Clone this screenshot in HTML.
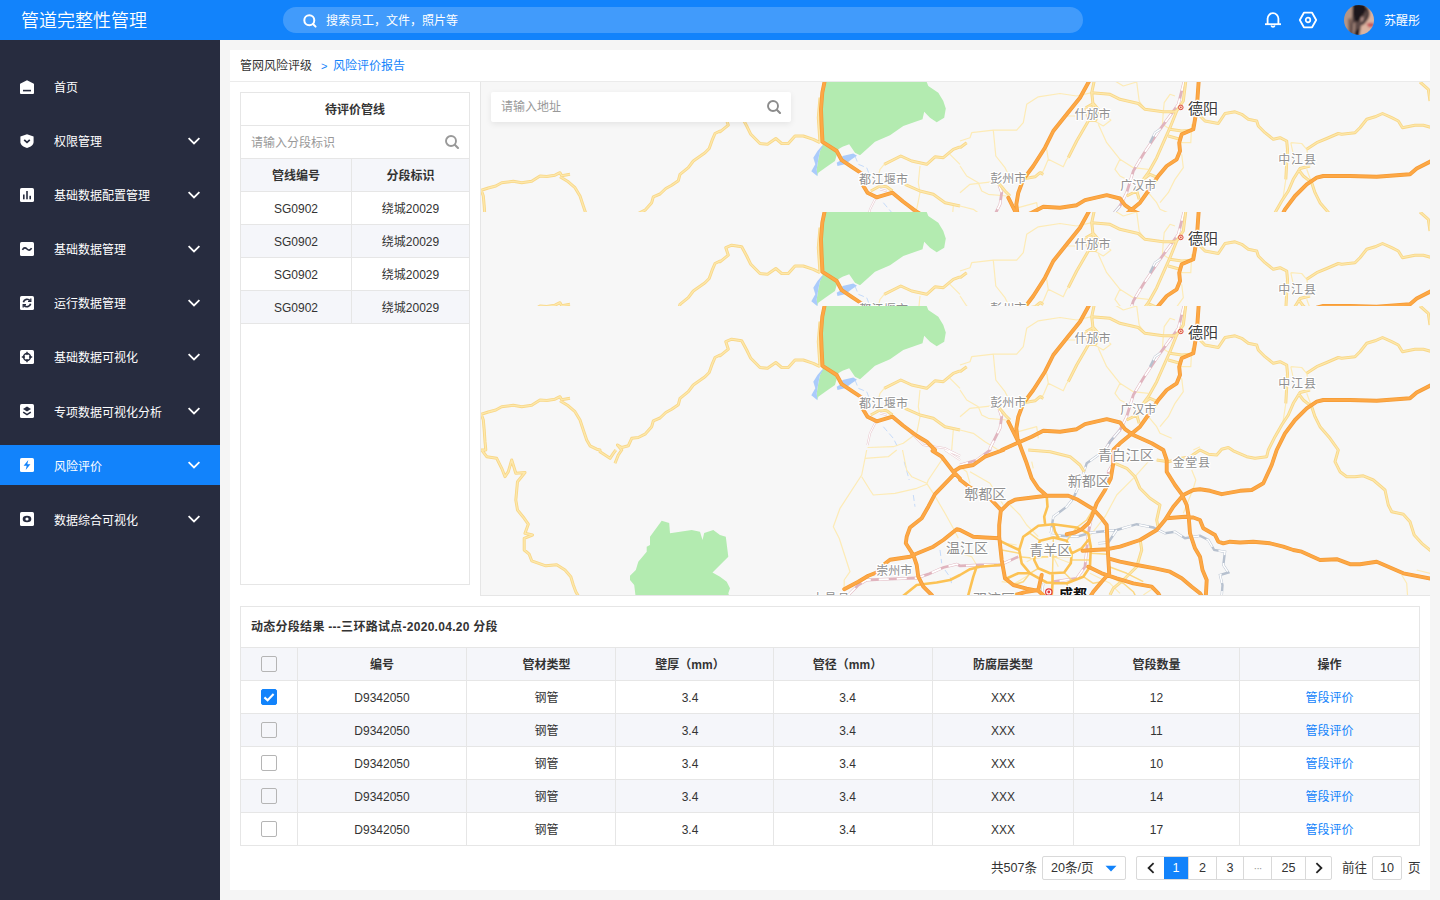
<!DOCTYPE html>
<html lang="zh-CN">
<head>
<meta charset="utf-8">
<title>管道完整性管理</title>
<style>
*{box-sizing:border-box;margin:0;padding:0}
html,body{width:1440px;height:900px;overflow:hidden}
body{position:relative;background:#f5f5f5;font-family:"Liberation Sans","Noto Sans CJK SC",sans-serif;font-size:12px;color:#333}
.abs{position:absolute}
#hdr{position:absolute;left:0;top:0;width:1440px;height:40px;background:#1283fb}
#hdr .title{position:absolute;left:21px;top:0;line-height:42px;font-size:18px;color:#fff;font-weight:350;letter-spacing:0}
#hdr .search{position:absolute;left:283px;top:7px;width:800px;height:26px;border-radius:13px;background:rgba(255,255,255,.2)}
#hdr .search span{position:absolute;left:43px;top:0;line-height:28px;color:#fff;font-size:12px}
#hdr .search svg{position:absolute;left:19px;top:6px}
#hdr .uname{position:absolute;left:1384px;top:0;line-height:42px;color:#fff;font-size:12px}
#side{position:absolute;left:0;top:40px;width:220px;height:860px;background:#272c3f}
.mi{position:absolute;left:0;width:220px;height:40px;color:#fff;font-size:12px;line-height:42px}
.mi.on{background:#1283fb}
.mi span{position:absolute;left:54px;top:0}
.mi svg.ic{position:absolute;left:19px;top:12px}
.mi svg.ch{position:absolute;left:187px;top:15px}
#card{position:absolute;left:230px;top:50px;width:1200px;height:840px;background:#fff}
#bc{position:absolute;left:0;top:0;width:1200px;height:32px;border-bottom:1px solid #ebebeb;line-height:32px}
#bc .a{position:absolute;left:10px;top:0;color:#333}
#bc .gt{position:absolute;left:91px;top:0;color:#1283fb;font-size:11px}
#bc .b{position:absolute;left:103px;top:0;color:#1283fb}
#lp{position:absolute;left:10px;top:42px;width:230px;height:493px;border:1px solid #e6e6e6}
#lp .r{position:absolute;left:0;width:228px;height:33px;border-bottom:1px solid #e6e6e6;line-height:34px;text-align:center}
#lp .r.g{background:#f5f6fa}
#lp .r b{font-weight:700}
#lp .c1{position:absolute;left:0;top:0;width:111px;height:32px;border-right:1px solid #e6e6e6}
#lp .c2{position:absolute;left:111px;top:0;width:117px;height:32px}
#map{position:absolute;left:250px;top:32px;width:950px;height:514px;border-left:1px solid #e6e6e6;border-bottom:1px solid #e6e6e6;background:#f7f7f7;overflow:hidden}
#bp{position:absolute;left:10px;top:556px;width:1180px;height:240px;border:1px solid #e6e6e6}
#bp .ttl{position:absolute;left:10px;top:0;line-height:41px;font-weight:700;color:#333;letter-spacing:.28px}
.tr{position:absolute;left:0;width:1178px;height:33px;border-top:1px solid #e6e6e6;line-height:34px;text-align:center}
.tr.g{background:#f5f6fa}
.tr div{position:absolute;top:0;height:32px;border-left:1px solid #e6e6e6}
.tr div:first-child{border-left:none}
.tr.h{font-weight:700}
.tr .lk{color:#1283fb}
.cb{position:absolute;left:20px;top:8px;width:16px;height:16px;border:1px solid #b5b5b5;border-radius:2px;background:transparent}
.cb.ck{background:#1283fb;border-color:#1283fb}
#pg{position:absolute;left:0;top:806px;width:1200px;height:24px;line-height:22px;font-size:12.6px;color:#333}
#pg .bx{position:absolute;top:0;height:24px;border:1px solid #d9d9d9;text-align:center;background:#fff}
</style>
</head>
<body>
<div id="hdr">
  <div class="title">管道完整性管理</div>
  <div class="search">
    <svg width="16" height="16" viewBox="0 0 16 16"><circle cx="7.3" cy="7.3" r="5" fill="none" stroke="#fff" stroke-width="2"/><path d="M11 11 L13.6 13.6" stroke="#fff" stroke-width="2" stroke-linecap="round"/></svg>
    <span>搜索员工，文件，照片等</span>
  </div>
  <svg class="abs" style="left:1263px;top:9px" width="20" height="20" viewBox="0 0 20 20"><path d="M4.6 15 V9.6 a5.4 5.4 0 0 1 10.8 0 V15" fill="none" stroke="#fff" stroke-width="1.8"/><path d="M2 15.2 H18" stroke="#fff" stroke-width="1.8"/><path d="M8.2 16.6 a1.9 1.9 0 0 0 3.6 0" fill="none" stroke="#fff" stroke-width="1.6"/></svg>
  <svg class="abs" style="left:1298px;top:10px" width="20" height="20" viewBox="0 0 20 20"><path d="M5.9 2.7 H14.1 L18.2 10 L14.1 17.3 H5.9 L1.8 10 Z" fill="none" stroke="#fff" stroke-width="1.8" stroke-linejoin="round"/><circle cx="10" cy="10" r="2.3" fill="none" stroke="#fff" stroke-width="1.7"/></svg>
  <svg class="abs" style="left:1344px;top:5px" width="30" height="30" viewBox="0 0 30 30">
    <defs><clipPath id="avc"><circle cx="15" cy="15" r="15"/></clipPath><filter id="avb" x="-10%" y="-10%" width="120%" height="120%"><feGaussianBlur stdDeviation="0.9"/></filter></defs>
    <g clip-path="url(#avc)"><g filter="url(#avb)"><rect x="-3" y="-3" width="36" height="36" fill="#dcb3a0"/>
    <path d="M-3 -3 H10 L8 33 H-3 Z" fill="#b59586"/>
    <path d="M4.2 14 L6.8 13 L7.5 33 L4.5 33 Z" fill="#7a5f56"/>
    <path d="M8.5 -2 L21 -1 L25 7 L24 13 L21 17.5 L17 21 L15 33 L6.5 33 L7 20 L8.2 10 Z" fill="#5c4846"/>
    <path d="M9 -2 L20.5 -1 L22.5 5 L18.5 10 L14 17 L10.5 16 L9 8 Z" fill="#1d161a"/>
    <path d="M22 2 C26.5 8 24.5 14 18 19.5" fill="none" stroke="#493737" stroke-width="2.2"/>
    <path d="M9.2 18 L11.4 17.4 L10.6 33 L8.4 33 Z" fill="#a18378"/>
    <path d="M11 26 L15.6 23.5 L14.6 33 L10 33 Z" fill="#251c1f"/>
    <path d="M16.8 12.5 L19.6 11.8 L19 15.6 L16.6 17.2 Z" fill="#b8948c"/>
    <ellipse cx="18.8" cy="8.6" rx="1.7" ry="1" fill="#241a1d"/>
    <path d="M22.4 19 L26 17.8 L30 18.2 L30 21.4 L25 22.4 Z" fill="#c5545a"/></g></g>
  </svg>
  <div class="uname">苏醒彤</div>
</div>
<div id="side">
<div class="mi" style="top:27px"><svg class="ic" width="16" height="16" viewBox="-1 -1 16 16"><path d="M7 0.3 L13.4 3.4 A1 1 0 0 1 14 4.3 V13 a1 1 0 0 1 -1 1 H1 a1 1 0 0 1 -1 -1 V4.3 A1 1 0 0 1 .6 3.4 Z" fill="#fff"/><rect x="3" y="9.8" width="8" height="1.6" fill="#272c3f"/></svg><span>首页</span></div>
<div class="mi" style="top:81px"><svg class="ic" width="16" height="16" viewBox="-1 -1 16 16"><path d="M7 0.2 L13.6 2.4 V8 C13.6 11 10.5 13 7 14 C3.5 13 .4 11 .4 8 V2.4 Z" fill="#fff"/><path d="M4.2 5.8 L7 8.4 L9.8 5.8" fill="none" stroke="#272c3f" stroke-width="1.7"/></svg><span>权限管理</span><svg class="ch" width="14" height="10" viewBox="0 0 14 10"><path d="M1.6 2.2 L7 7.4 L12.4 2.2" fill="none" stroke="#fff" stroke-width="1.8"/></svg></div>
<div class="mi" style="top:135px"><svg class="ic" width="16" height="16" viewBox="-1 -1 16 16"><rect width="14" height="14" rx="1.6" fill="#fff"/><rect x="3" y="6.5" width="1.6" height="4.8" fill="#272c3f"/><rect x="6.2" y="3" width="1.6" height="8.3" fill="#272c3f"/><rect x="9.4" y="7.8" width="1.6" height="3.5" fill="#272c3f"/></svg><span>基础数据配置管理</span><svg class="ch" width="14" height="10" viewBox="0 0 14 10"><path d="M1.6 2.2 L7 7.4 L12.4 2.2" fill="none" stroke="#fff" stroke-width="1.8"/></svg></div>
<div class="mi" style="top:189px"><svg class="ic" width="16" height="16" viewBox="-1 -1 16 16"><rect width="14" height="14" rx="1.6" fill="#fff"/><path d="M2.4 7.8 C4 5.2 5.6 5.6 7 7 C8.4 8.4 10 8.8 11.6 6.2" fill="none" stroke="#272c3f" stroke-width="1.6"/></svg><span>基础数据管理</span><svg class="ch" width="14" height="10" viewBox="0 0 14 10"><path d="M1.6 2.2 L7 7.4 L12.4 2.2" fill="none" stroke="#fff" stroke-width="1.8"/></svg></div>
<div class="mi" style="top:243px"><svg class="ic" width="16" height="16" viewBox="-1 -1 16 16"><rect width="14" height="14" rx="1.6" fill="#fff"/><path d="M3.4 6.2 A3.8 3.8 0 0 1 10 4.6" fill="none" stroke="#272c3f" stroke-width="1.7"/><path d="M10.8 2.6 V5.4 H8" fill="none" stroke="#272c3f" stroke-width="1.3"/><path d="M10.6 7.8 A3.8 3.8 0 0 1 4 9.4" fill="none" stroke="#272c3f" stroke-width="1.7"/><path d="M3.2 11.4 V8.6 H6" fill="none" stroke="#272c3f" stroke-width="1.3"/></svg><span>运行数据管理</span><svg class="ch" width="14" height="10" viewBox="0 0 14 10"><path d="M1.6 2.2 L7 7.4 L12.4 2.2" fill="none" stroke="#fff" stroke-width="1.8"/></svg></div>
<div class="mi" style="top:297px"><svg class="ic" width="16" height="16" viewBox="-1 -1 16 16"><rect width="14" height="14" rx="1.6" fill="#fff"/><circle cx="7" cy="7" r="3.4" fill="none" stroke="#272c3f" stroke-width="1.5"/><path d="M7 1.8 V5 M7 9 V12.2 M1.8 7 H5 M9 7 H12.2" stroke="#272c3f" stroke-width="1.4"/></svg><span>基础数据可视化</span><svg class="ch" width="14" height="10" viewBox="0 0 14 10"><path d="M1.6 2.2 L7 7.4 L12.4 2.2" fill="none" stroke="#fff" stroke-width="1.8"/></svg></div>
<div class="mi" style="top:351px"><svg class="ic" width="16" height="16" viewBox="-1 -1 16 16"><rect width="14" height="14" rx="1.6" fill="#fff"/><path d="M7 2.6 L11 5 L7 7.4 L3 5 Z" fill="#272c3f"/><path d="M3.2 8.2 L7 10.6 L10.8 8.2" fill="none" stroke="#272c3f" stroke-width="1.5"/></svg><span style="top:1px">专项数据可视化分析</span><svg class="ch" width="14" height="10" viewBox="0 0 14 10"><path d="M1.6 2.2 L7 7.4 L12.4 2.2" fill="none" stroke="#fff" stroke-width="1.8"/></svg></div>
<div class="mi on" style="top:405px"><svg class="ic" width="16" height="16" viewBox="-1 -1 16 16"><rect width="14" height="14" rx="1.6" fill="#fff"/><path d="M8.3 2 L3.6 7.8 H6.7 L5.7 12 L10.4 6.2 H7.3 Z" fill="#1283fb"/></svg><span style="top:1px">风险评价</span><svg class="ch" width="14" height="10" viewBox="0 0 14 10"><path d="M1.6 2.2 L7 7.4 L12.4 2.2" fill="none" stroke="#fff" stroke-width="1.8"/></svg></div>
<div class="mi" style="top:459px"><svg class="ic" width="16" height="16" viewBox="-1 -1 16 16"><rect width="14" height="14" rx="1.6" fill="#fff"/><ellipse cx="7" cy="7" rx="4.3" ry="3.3" fill="#272c3f"/><circle cx="7" cy="7" r="1.6" fill="#fff"/></svg><span style="top:1px">数据综合可视化</span><svg class="ch" width="14" height="10" viewBox="0 0 14 10"><path d="M1.6 2.2 L7 7.4 L12.4 2.2" fill="none" stroke="#fff" stroke-width="1.8"/></svg></div>
</div>
<div id="card">
<div id="bc"><span class="a">管网风险评级</span><span class="gt">&gt;</span><span class="b">风险评价报告</span></div>
<div id="lp">
<div class="r" style="top:0"><b>待评价管线</b></div>
<div class="r" style="top:33px;text-align:left"><span style="position:absolute;left:10px;top:0;color:#999">请输入分段标识</span><svg style="position:absolute;left:203px;top:8px" width="16" height="16" viewBox="0 0 16 16"><circle cx="7" cy="7" r="5" fill="none" stroke="#999" stroke-width="1.9"/><path d="M10.8 10.8 L14 14" stroke="#999" stroke-width="2.1" stroke-linecap="round"/></svg></div>
<div class="r g" style="top:66px"><div class="c1"><b>管线编号</b></div><div class="c2"><b>分段标识</b></div></div>
<div class="r" style="top:99px"><div class="c1">SG0902</div><div class="c2">绕城20029</div></div>
<div class="r g" style="top:132px"><div class="c1">SG0902</div><div class="c2">绕城20029</div></div>
<div class="r" style="top:165px"><div class="c1">SG0902</div><div class="c2">绕城20029</div></div>
<div class="r g" style="top:198px"><div class="c1">SG0902</div><div class="c2">绕城20029</div></div>
</div>
<div id="map">
<svg style="position:absolute;left:0;top:0px" width="949" height="130" viewBox="0 0 949 130" font-family='"Liberation Sans","Noto Sans CJK SC",sans-serif'><rect width="949" height="130" fill="#f7f7f7"/>
<path d="M342 0 L445.7 0 L447.3 4 L457.3 10.7 L462.3 19 L464.8 26.5 L463.2 35.7 L455.7 40.3 L449 35.7 L443.2 29.8 L441.5 37.3 L422.3 44 L409 53.2 L394 59.8 L385.7 67.3 L379 73.2 L374 70.7 L368.2 62.3 L361.5 64.8 L357.3 67.3 L354 79 L345.7 84.8 L337.3 90.7 L336.5 94 L335.7 87.3 L337.3 77.3 L339 69 L341.5 63.2 L340.7 44 L340 27.3 L341.3 10.7 Z M180.7 214.8 L188.2 217 L189 227.3 L210.7 224 L219 225.7 L221.5 234 L223.2 227 L232.3 224 L239 229 L244.8 230.7 L247.3 250.7 L231.5 266.5 L239 270.7 L245.7 275.7 L249 282.3 L247.3 287.3 L249 292.3 L154.8 292.3 L153.2 279 L149 274 L149 269.8 L154.8 264 L157.3 255.7 L165.7 245.7 L165.7 240.7 L169 239 L169 230.7 Z" fill="#b3ebb0"/>
<path d="M341 63.7 L336.5 69 L332.3 75.7 L334.3 82.3 L330.3 89.3 L336.5 94.3 L335.7 87.3 L337.3 77.3 L339 69 L342 64.3 Z M361.5 74 L372.3 71.5 L376 73.7 L370.7 77.3 L364 82.3 L356.5 84 L355.7 80.7 L359.8 78.2 Z" fill="#aacbfb"/>
<path d="M423.2 155.7 L428.2 174 M432.3 189 L434 200.7 M459 244 L460.7 257.3 M464 264 L469.8 272.3 L470.7 279 M374 74 L377.3 82.3 L385.7 85.7 L389 94 M402.3 120.7 L412.3 132.3 L417.3 142.3" fill="none" stroke="#b9d3fa" stroke-width="0.8" stroke-dasharray="6 3"/>
<path d="M397.3 94 L399 87.3 L403.2 82.3 M439 84 L437.3 100.7 L439 110.7 L435.7 127.3 L422.3 137.3 L412.3 140.7 L386.5 141.5 M469 72.3 L479 82.3 M472.3 124 L470.7 144 M385.7 144 L380.7 169 L359 202.3 L352.3 220.7 L358.2 232.3 L369 265.7 L363.2 274 L363.2 282.3 M384 152.3 L407.3 150.7 L415.7 144 M380.7 170.7 L389 184 L392.3 189 L414 187.3 L435.7 182.3 L445.7 178.2 L447.3 174 L460.7 154 M421.5 144 L425.7 164 L430.7 170.7 L445.7 177.3 L452.3 187.3 L464 207.3 L472.3 222.3 L477.3 232.3 M479 84 L485.7 94 L497.3 100.7 L500.7 109 L507.3 112.3 L525.7 114 M479 110.7 L489 102.3 L510.7 99.8 M479 124 L492.3 127.3 L504 135.7 L517.3 144 M479 59 L489 55.7 L490.7 50.7 L512.3 48.2 L535.7 48.2 L542.3 40.7 L545.7 22.3 L557.3 14.8 L579 11.5 L595.7 14 L610.7 10.7 M512.3 48.2 L514.8 74 L524 85.7 L527.3 92.3 M565.7 67.3 L567.3 77.3 L582.3 84.8 L585.7 77.3 L587.3 75.7 M567.3 77.3 L562.3 89 L559 90.7 M537.3 125.7 L555.7 120.7 L557.3 132.3 M617.3 42.3 L625.7 60.7 L639 77.3 L652.3 85.7 L667.3 87.3 M639 77.3 L634 87.3 L639 94 L652.3 100.7 M612.3 38.2 L622.3 44 L629.8 38.2 L625.7 34 M582.3 34 L595.7 34 M634 -1 L642.3 4 L655.7 0 M655.7 0 L658.2 19 L664 27.3 M682.3 29.8 L681.5 42.3 L689 47.3 M694 14 L689 12.3 L683.2 20.7 L682.3 29.8 M710.7 42.3 L709.8 60.7 L699 60.7 M700.7 72.3 L702.3 85.7 L694 97.3 L687.3 110.7 L679 120.7 M667.3 110.7 L675.7 120.7 L679 127.3 L690.7 132.3 M712.3 144 L719 140.7 M809.8 60.7 L820.7 61.5 L825.7 67.3 L829 84 M809.8 60.7 L812.3 72.3 L812.3 84 M804.8 97.3 L802.3 114 L797.3 127.3 M825.7 87.3 L830.7 100.7 M920.7 269 L925.7 277.3 L926.5 289 M935.7 264 L949.8 267.7 M479 160.7 L485.7 165.7 L489 177.3 M489 165.7 L509 177.3 L522.3 199 M529 199 L539 209 L545.7 219 L557.3 230.7 M520.7 236.5 L535.7 239 M479 247.3 L490.7 250.7 L495.7 259 M605.7 234 L624 210.7 L635.7 189 L654 170.7 L667.3 155.7 M635.7 159 L645.7 162.3 M609 267.3 L629 277.3 L639 287.3 M702.3 207.3 L705.7 199 L712.3 182.3 L714.8 174 L710.7 164 M550.7 155.7 L552.3 162.3 M545.7 255.7 L552.3 252.3 L572.3 250.7 L589.8 257.3 M572.3 250.7 L577.3 260.7 M520.7 275.7 L534 277.3 L549 268.2 M662.3 289 L672.3 282.3" fill="none" stroke="#fdebb6" stroke-width="1.2" stroke-linejoin="round"/>
<path d="M395.7 114 L389 127.3 L386.5 139 M399 107.3 L405.7 109 M427.3 124 L442.3 139 L464 142.3 L479 149.8 L464 144 L479 154" fill="none" stroke="#e6c3ca" stroke-width="2"/>
<path d="M395.7 114 L389 127.3 L386.5 139 M399 107.3 L405.7 109 M427.3 124 L442.3 139 L464 142.3 L479 149.8 L464 144 L479 154" fill="none" stroke="#fff" stroke-width="1.1"/>
<path d="M703.2 -1 L697.3 22.3 L679 47.3 L662.3 72.3 L652.3 89 L645.7 110.7 L639 124 L629 135.7 L624 144 M367.3 289 L377.3 279 L385.7 274 L405.7 273.2 L435.7 272 L447.3 268.2 L462.3 261.5 L475.7 258.2 L479 259.8 L479 259.8 L499 259 L519 259 L537.3 250.7 M517.3 100.7 L520.7 110.7 L519 122.3 L509 142.3 L509 144 L495.7 154 L479 159 M632.3 157.3 L627.3 165.7 L627.3 175.7 M610.7 210.7 L607.3 227.3 L604 260.7 L595.7 272.3 L572.3 275.7" fill="none" stroke="#e0b4be" stroke-width="2.8"/>
<path d="M703.2 -1 L697.3 22.3 L679 47.3 L662.3 72.3 L652.3 89 L645.7 110.7 L639 124 L629 135.7 L624 144 M367.3 289 L377.3 279 L385.7 274 L405.7 273.2 L435.7 272 L447.3 268.2 L462.3 261.5 L475.7 258.2 L479 259.8 L479 259.8 L499 259 L519 259 L537.3 250.7 M517.3 100.7 L520.7 110.7 L519 122.3 L509 142.3 L509 144 L495.7 154 L479 159 M632.3 157.3 L627.3 165.7 L627.3 175.7 M610.7 210.7 L607.3 227.3 L604 260.7 L595.7 272.3 L572.3 275.7" fill="none" stroke="#fff" stroke-width="1.8" stroke-dasharray="10 8"/>
<path d="M617.3 149 L605.7 157.3 L599 177.3 L592.3 192.3 L585.7 200.7 L572.3 210.7 L569.8 227.3 M569.8 229 L595.7 230.7 L610.7 226.5 L635.7 224 L655.7 218.2 L672.3 221.5 L684 227.3 L694 225.7 L704 232.3 L719 229.8 L719 229.8 L727.3 234 L733.2 244 L744 245.7 L742.3 259 L747.3 266.5 L739 269 L741.5 279 L740.7 289.8 M617.3 237.3 L627.3 236.5 L635.7 224 M679 47.3 L674 50.7 L669 60.7 M639 124 L629 135.7 L624 144 M562.3 277.3 L560.7 289" fill="none" stroke="#b7c1cf" stroke-width="2.4"/>
<path d="M617.3 149 L605.7 157.3 L599 177.3 L592.3 192.3 L585.7 200.7 L572.3 210.7 L569.8 227.3 M569.8 229 L595.7 230.7 L610.7 226.5 L635.7 224 L655.7 218.2 L672.3 221.5 L684 227.3 L694 225.7 L704 232.3 L719 229.8 L719 229.8 L727.3 234 L733.2 244 L744 245.7 L742.3 259 L747.3 266.5 L739 269 L741.5 279 L740.7 289.8 M617.3 237.3 L627.3 236.5 L635.7 224 M679 47.3 L674 50.7 L669 60.7 M639 124 L629 135.7 L624 144 M562.3 277.3 L560.7 289" fill="none" stroke="#fff" stroke-width="1.5" stroke-dasharray="10 8"/>
<path d="M0.3 108.2 L7.3 106 L14.8 104 L20.7 100.7 L32.3 99.3 L40.7 100.7 L50.7 99.3 L59 94 L65.7 94.5 L74 93.2 L79 90.7 L80.7 93.7 L89 92.3 M79 94.8 L87.3 99.8 L94 105.7 L99 114 L102.3 124 L105.7 134 L109 139.8 L115.7 143.2 L119 144 L119 145.7 L129 152.3 L132.3 147.3 L134.8 144 M134 157.3 L137.3 149 L140.7 144 L136.5 139 L140.7 141.5 L147.3 139.8 L150.7 132.3 L157.3 131.5 L164 128.2 L170.7 120.7 L172.3 114.8 L179 112 L184.8 106.5 L190.7 103.2 L197.3 98.7 L199 92.3 L207.3 85.7 L212.3 79 L224 70.7 L228.2 66.5 L231.5 57.3 L234 51.5 L239 49 L239 49.8 L247.3 43.2 L244.8 35.7 L250.7 33.2 L260.7 34.8 L265.7 44 L269.8 52.3 L279 61.5 L286.5 62.3 L294.8 56.5 L300.7 61.5 L307.3 61.5 L314 54 L322.3 54 L332.3 57.3 L339 60.7 M0.3 108.2 L2.3 114 L3.2 124 L4 135.7 L4.8 144 L0.7 144 L5.7 150.7 L15.7 152.3 L20.7 162.3 L24 170.7 L27.3 165.7 L30.7 154 L34.8 167.3 L44 166.5 L36.5 175.7 L34.8 194 L36.5 204 L43.2 212.3 L47.3 218.2 L44 227.3 L51.5 229 L43.2 232.3 L43.2 244 L48.2 248.2 L50.7 254.8 L64.8 259.8 L75.7 258.7 L84 264 L89.8 270.7 L92.3 279 L94.8 285.7 L98.2 291.5 M339 15.7 L337.3 35.7 L338.2 49 L339 60.7 M613.2 -1 L610.7 10.7 L611.5 17.3 L612.3 25.7 M610.7 10.7 L629 12.3 L639 17.3 L657.3 21.5 L664 27.3 L682.3 29.8 L694 29.8 L699 25.7 M607.3 39 L595.7 59 L587.3 75.7 M604.8 25.7 L612.3 21.5 L617.3 27.3 L614.8 38.2 L607.3 38.2 L604.8 25.7 M704.8 -1 L702.3 19 L695.7 29 L689 45.7 L682.3 60.7 L675.7 75.7 L667.3 90.7 L662.3 97.3 L655.7 109 L645.7 114 M689 47.3 L700.7 49 L710.7 48.2 M687.3 54 L699 57.3 M544 96.5 L554 94.8 L559 90.7 L562.3 92.3 M517.3 100.7 L524 109 L529 114 M479 65.7 L485.7 60.7 M662.3 97.3 L669 92.3 L676.5 95.7 M655.7 109 L658.2 117.3 M719 34 L724 39 L737.3 41.5 L744 31.5 L754 29.8 L760.7 32.3 L767.3 37.3 L775.7 39 L777.3 44 L784 50.7 L792.3 57.3 L799 55.7 L805.7 59 L806.5 67.3 L805.7 80.7 L804.8 97.3 M825.7 67.3 L835.7 60.7 L845.7 56.5 L857.3 51.5 L860.7 52.3 L874 50.7 L879 45.7 L885.7 37.3 L894 34.8 L901.5 31.5 L910.7 35.7 L917.3 39 L921.5 45.7 L934 43.2 L942.3 43.2 L949.8 45.3 M817.3 87.3 L822.3 94 L830.7 100.7 L834 110.7 L839 120.7 L849 132.3 L857.3 144 L857.3 144 L854 155.7 L859 165.7 L865.7 170.7 L874 170.7 L882.3 169.8 L892.3 174 L904 184 L907.3 199 L910.7 205.7 L922.3 208.2 L929 215.7 L933.2 229 L940.7 237.3 L949.8 244.8 M829 84 L819 86.5 L812.3 97.3 L807.3 109 L800.7 119 L794 130.7 L787.3 144 L785.7 150.7 L774 152.3 L765.7 150.7 L752.3 144.8 L747.3 141.5 L740.7 143.2 L735.7 149 L727.3 148.2 L719 144 L709 150.7 L700.7 152.3 L687.3 155.7 L675.7 154 M939 0 L947.3 7.3 L949 19 M389.8 109 L399 104 L405.7 104.8 L411.5 109 M547.3 144 L569 145.7 L589 150.7 L599 159 L603.2 165.7 M634 157.3 L645.7 162.3 L654 170.7 L659 182.3 L669 192.3 L679 199 L675.7 214 L677.3 222.3 M659 232.3 L660.7 244 L655.7 260.7 L642.3 274 L632.3 282.3 L629 289 M403.2 82.3 L419.8 74 L430.7 79 L445.7 82.3 L454 74.8 L462.3 75.7 L472.3 67.3 L479 64.8 M424 102.3 L439 109 L452.3 112.3 L464 120.7 L479 124" fill="none" stroke="#f8d788" stroke-width="3" stroke-linejoin="round"/>
<path d="M0.3 108.2 L7.3 106 L14.8 104 L20.7 100.7 L32.3 99.3 L40.7 100.7 L50.7 99.3 L59 94 L65.7 94.5 L74 93.2 L79 90.7 L80.7 93.7 L89 92.3 M79 94.8 L87.3 99.8 L94 105.7 L99 114 L102.3 124 L105.7 134 L109 139.8 L115.7 143.2 L119 144 L119 145.7 L129 152.3 L132.3 147.3 L134.8 144 M134 157.3 L137.3 149 L140.7 144 L136.5 139 L140.7 141.5 L147.3 139.8 L150.7 132.3 L157.3 131.5 L164 128.2 L170.7 120.7 L172.3 114.8 L179 112 L184.8 106.5 L190.7 103.2 L197.3 98.7 L199 92.3 L207.3 85.7 L212.3 79 L224 70.7 L228.2 66.5 L231.5 57.3 L234 51.5 L239 49 L239 49.8 L247.3 43.2 L244.8 35.7 L250.7 33.2 L260.7 34.8 L265.7 44 L269.8 52.3 L279 61.5 L286.5 62.3 L294.8 56.5 L300.7 61.5 L307.3 61.5 L314 54 L322.3 54 L332.3 57.3 L339 60.7 M0.3 108.2 L2.3 114 L3.2 124 L4 135.7 L4.8 144 L0.7 144 L5.7 150.7 L15.7 152.3 L20.7 162.3 L24 170.7 L27.3 165.7 L30.7 154 L34.8 167.3 L44 166.5 L36.5 175.7 L34.8 194 L36.5 204 L43.2 212.3 L47.3 218.2 L44 227.3 L51.5 229 L43.2 232.3 L43.2 244 L48.2 248.2 L50.7 254.8 L64.8 259.8 L75.7 258.7 L84 264 L89.8 270.7 L92.3 279 L94.8 285.7 L98.2 291.5 M339 15.7 L337.3 35.7 L338.2 49 L339 60.7 M613.2 -1 L610.7 10.7 L611.5 17.3 L612.3 25.7 M610.7 10.7 L629 12.3 L639 17.3 L657.3 21.5 L664 27.3 L682.3 29.8 L694 29.8 L699 25.7 M607.3 39 L595.7 59 L587.3 75.7 M604.8 25.7 L612.3 21.5 L617.3 27.3 L614.8 38.2 L607.3 38.2 L604.8 25.7 M704.8 -1 L702.3 19 L695.7 29 L689 45.7 L682.3 60.7 L675.7 75.7 L667.3 90.7 L662.3 97.3 L655.7 109 L645.7 114 M689 47.3 L700.7 49 L710.7 48.2 M687.3 54 L699 57.3 M544 96.5 L554 94.8 L559 90.7 L562.3 92.3 M517.3 100.7 L524 109 L529 114 M479 65.7 L485.7 60.7 M662.3 97.3 L669 92.3 L676.5 95.7 M655.7 109 L658.2 117.3 M719 34 L724 39 L737.3 41.5 L744 31.5 L754 29.8 L760.7 32.3 L767.3 37.3 L775.7 39 L777.3 44 L784 50.7 L792.3 57.3 L799 55.7 L805.7 59 L806.5 67.3 L805.7 80.7 L804.8 97.3 M825.7 67.3 L835.7 60.7 L845.7 56.5 L857.3 51.5 L860.7 52.3 L874 50.7 L879 45.7 L885.7 37.3 L894 34.8 L901.5 31.5 L910.7 35.7 L917.3 39 L921.5 45.7 L934 43.2 L942.3 43.2 L949.8 45.3 M817.3 87.3 L822.3 94 L830.7 100.7 L834 110.7 L839 120.7 L849 132.3 L857.3 144 L857.3 144 L854 155.7 L859 165.7 L865.7 170.7 L874 170.7 L882.3 169.8 L892.3 174 L904 184 L907.3 199 L910.7 205.7 L922.3 208.2 L929 215.7 L933.2 229 L940.7 237.3 L949.8 244.8 M829 84 L819 86.5 L812.3 97.3 L807.3 109 L800.7 119 L794 130.7 L787.3 144 L785.7 150.7 L774 152.3 L765.7 150.7 L752.3 144.8 L747.3 141.5 L740.7 143.2 L735.7 149 L727.3 148.2 L719 144 L709 150.7 L700.7 152.3 L687.3 155.7 L675.7 154 M939 0 L947.3 7.3 L949 19 M389.8 109 L399 104 L405.7 104.8 L411.5 109 M547.3 144 L569 145.7 L589 150.7 L599 159 L603.2 165.7 M634 157.3 L645.7 162.3 L654 170.7 L659 182.3 L669 192.3 L679 199 L675.7 214 L677.3 222.3 M659 232.3 L660.7 244 L655.7 260.7 L642.3 274 L632.3 282.3 L629 289 M403.2 82.3 L419.8 74 L430.7 79 L445.7 82.3 L454 74.8 L462.3 75.7 L472.3 67.3 L479 64.8 M424 102.3 L439 109 L452.3 112.3 L464 120.7 L479 124" fill="none" stroke="#fde8ac" stroke-width="1.3" stroke-linejoin="round"/>
<path d="M572.3 231.5 L572 250.7 L571.5 267.3 M554 250.7 L572.3 250.7 L590.7 250.7 M585.7 234.8 L595.7 221.5 M559 234.8 L549 227.3 L542.3 230.7 M557.3 262.3 L549 267.3 M583.2 266.5 L592.3 275.7 M590.7 254 L609 254 M538.2 250.7 L553.2 252.3 M595.7 221.5 L605.7 214 L612.3 203.2 M609.8 247.3 L626.5 248.2 M602.3 270.7 L612.3 277.3 L620.7 275.7 M549 267.3 L542.3 275.7 L532.3 279 M520.7 244 L538.2 247.3 M585.7 277.3 L589 287.3 L595.7 292.3 M629 270.7 L642.3 277.3 L652.3 285.7 L655.7 292.3 M628.2 260.7 L645.7 267.3 L662.3 275.7" fill="none" stroke="#fcd883" stroke-width="1.5" stroke-linejoin="round"/>
<path d="M538.2 244 L542.3 230.7 L557.3 219.8 L572.3 218.2 L595.7 221.5 L607.3 227.3 L609.8 240.7 L609 260.7 L602.3 270.7 L585.7 277.3 L565.7 276.5 L549 267.3 L540.7 257.3 L538.2 244 M554 247.3 L559 234.8 L572.3 231.5 L585.7 234.8 L590.7 247.3 L589.8 257.3 L583.2 266.5 L569 267.3 L557.3 262.3 L553.2 254 L554 247.3 M565.7 189.8 L566.5 200.7 L563.2 210.7 L564 217.3 M519 234.8 L529 239.8 L538.2 244 M422.3 289.8 L435.7 279 L455.7 276.5 L469 274 L479 269 L479 269 L489 263.2 L499 260.7 L519 259 M572.3 218.2 L574 225.7 L577.3 231.5 M571.5 267.3 L571.5 277.3 L570.7 290.7 M590.7 247.3 L600.7 242.3 L607.3 234 M524 273.2 L537.3 267.3 L549 267.3 M487.3 289 L492.3 270.7 L495.7 260.7" fill="none" stroke="#fcc254" stroke-width="2.6" stroke-linejoin="round" stroke-linecap="round"/>
<path d="M343.7 -1 L341.3 10.7 L340 27.3 L340.7 44 L341.5 59.8 L355.7 69 L360.7 78.2 L370.7 84.8 L380.7 91.5 L382 103.2 L386.5 110.7 L395.7 115.3 L411.5 110.7 L422.3 119.8 L435.7 129.8 L445.7 135.7 L454 144 L451.5 144.8 L460.7 150.7 L472.3 165.7 L479 172.7 L479 173.7 L489 181.5 L509 192.3 L520.3 204.3 M474 167.3 L454 188.2 L447.3 200.7 L440.7 212.3 L429 221.5 L425.7 230.7 L424.8 237.3 L432.3 249 L435.7 259 L437.3 270.7 L442.3 280.7 L450.7 289 L454.8 294.8 M363.2 283.2 L377.3 275.7 L387.3 269.8 L395.7 266.5 L403.2 258.2 L409 253.7 L429 250.7 L432.3 249 L452.3 240.7 L462.3 234 L475.7 223.2 L479 224 L479 224 L492.3 230.7 L504 231.5 L518.2 232.3 M565.7 292.3 L557.3 284.8 L545.7 282.7 L532.3 279 L524 272.3 L520.7 254 L518.2 230.7 L518.2 219 L519.8 204.8 L527.3 197.3 L534 193.7 L565.7 189.8 L587.3 189.8 L595.7 193.2 L612.3 203.2 L620.7 212.3 L625.7 219 L626.5 237.3 L627.3 252.3 L628.2 267.3 L620.7 275.7 L612.3 285.7 L608.2 292.3 M608.2 -1 L599 15.7 L585.7 32.3 L572.3 49 L564 65.7 L552.3 84 L542.3 97.3 L537.3 110.7 L535.3 122.3 L536.5 132.3 L540.7 144 L540.7 144 L545.7 157.3 L550.7 172.3 L557.3 182.3 L565.7 189.8 M527.3 115.7 L532.3 125.7 L536.5 134 M472.3 165.7 L479 161.5 L479 161.5 L492.3 159 L504 150.7 L522.3 144 L520.7 144 L535.7 137.3 L550.7 130.7 L562.3 124.8 L579 125.7 L595.7 123.2 L604 118.2 L625.7 113.2 L639 116.5 L644 123.2 L652.3 129 L670.7 137.3 L682.3 144 L682.3 144 L685.7 154 L685.7 165.7 L694 179 L700.7 188.2 L705.7 199 L707.7 210.7 L709 227.3 L714 242.3 L719 250.7 L719 250.7 L721.5 264 L725.7 274 L724.8 290.7 M717.7 -1 L715.7 27.3 L712.3 47.3 L700.7 52.3 L698.2 60.7 L699 69 L695.7 77.3 L685.7 84 L677.3 94 L667.3 109 L659 120.7 L649 129 L639 137.3 L632.3 144 L632.3 144 L632.3 157.3 L629.8 172.3 L624 184 L615.7 197.3 L610.7 210.7 L607.3 217.3 L600.7 223.2 L594 226.5 L585.7 228.2 M949.8 79.3 L935.7 86.5 L929 92.3 L915.7 93.2 L895.7 94.8 L869 94 L842.3 94 L835.7 95.7 L825.7 102.3 L814 114 L804 127.3 L795.7 144 L795.7 144 L790.7 159 L782.3 177.3 L770.7 184 L759 184.8 L740.7 188.2 L729 184.8 L719 183.2 L719 183.2 L712.3 184 L702.3 189 L692.3 200.7 L684 214 L675.7 224 L659 234 L639 240.7 L626.5 243.2 L612.3 244 L601.5 244.8 M685.7 212.3 L704 210.7 L712.3 211.5 L719 214 L719 214 L722.3 222.3 L734 229 L737.3 235.7 L742.3 237.3 L749 235.7 L759 236.5 L772.3 235.7 L789 237.3 L802.3 240.7 L812.3 244 L820.7 245.7 L839 254 L855.7 253.2 L869 258.2 L879 258.2 L895.7 255.7 L922.3 267.3 L949.8 272.7 M627.3 252.3 L639 255.7 L655.7 259 L674 262.3 L689 265.7 L700.7 272.3 L710.7 280.7 L719 287.3 L719 287.3 L722.3 292.3 M607.3 260.7 L620.7 267.3 L635.7 272.3 L652.3 277.3 L670.7 280.7 L677.3 287.3 L679.8 292.3 M534 289 L545.7 285.7 L557.3 284 L560.7 269" fill="none" stroke="#f49b35" stroke-width="3.9" stroke-linejoin="round" stroke-linecap="round"/>
<path d="M343.7 -1 L341.3 10.7 L340 27.3 L340.7 44 L341.5 59.8 L355.7 69 L360.7 78.2 L370.7 84.8 L380.7 91.5 L382 103.2 L386.5 110.7 L395.7 115.3 L411.5 110.7 L422.3 119.8 L435.7 129.8 L445.7 135.7 L454 144 L451.5 144.8 L460.7 150.7 L472.3 165.7 L479 172.7 L479 173.7 L489 181.5 L509 192.3 L520.3 204.3 M474 167.3 L454 188.2 L447.3 200.7 L440.7 212.3 L429 221.5 L425.7 230.7 L424.8 237.3 L432.3 249 L435.7 259 L437.3 270.7 L442.3 280.7 L450.7 289 L454.8 294.8 M363.2 283.2 L377.3 275.7 L387.3 269.8 L395.7 266.5 L403.2 258.2 L409 253.7 L429 250.7 L432.3 249 L452.3 240.7 L462.3 234 L475.7 223.2 L479 224 L479 224 L492.3 230.7 L504 231.5 L518.2 232.3 M565.7 292.3 L557.3 284.8 L545.7 282.7 L532.3 279 L524 272.3 L520.7 254 L518.2 230.7 L518.2 219 L519.8 204.8 L527.3 197.3 L534 193.7 L565.7 189.8 L587.3 189.8 L595.7 193.2 L612.3 203.2 L620.7 212.3 L625.7 219 L626.5 237.3 L627.3 252.3 L628.2 267.3 L620.7 275.7 L612.3 285.7 L608.2 292.3 M608.2 -1 L599 15.7 L585.7 32.3 L572.3 49 L564 65.7 L552.3 84 L542.3 97.3 L537.3 110.7 L535.3 122.3 L536.5 132.3 L540.7 144 L540.7 144 L545.7 157.3 L550.7 172.3 L557.3 182.3 L565.7 189.8 M527.3 115.7 L532.3 125.7 L536.5 134 M472.3 165.7 L479 161.5 L479 161.5 L492.3 159 L504 150.7 L522.3 144 L520.7 144 L535.7 137.3 L550.7 130.7 L562.3 124.8 L579 125.7 L595.7 123.2 L604 118.2 L625.7 113.2 L639 116.5 L644 123.2 L652.3 129 L670.7 137.3 L682.3 144 L682.3 144 L685.7 154 L685.7 165.7 L694 179 L700.7 188.2 L705.7 199 L707.7 210.7 L709 227.3 L714 242.3 L719 250.7 L719 250.7 L721.5 264 L725.7 274 L724.8 290.7 M717.7 -1 L715.7 27.3 L712.3 47.3 L700.7 52.3 L698.2 60.7 L699 69 L695.7 77.3 L685.7 84 L677.3 94 L667.3 109 L659 120.7 L649 129 L639 137.3 L632.3 144 L632.3 144 L632.3 157.3 L629.8 172.3 L624 184 L615.7 197.3 L610.7 210.7 L607.3 217.3 L600.7 223.2 L594 226.5 L585.7 228.2 M949.8 79.3 L935.7 86.5 L929 92.3 L915.7 93.2 L895.7 94.8 L869 94 L842.3 94 L835.7 95.7 L825.7 102.3 L814 114 L804 127.3 L795.7 144 L795.7 144 L790.7 159 L782.3 177.3 L770.7 184 L759 184.8 L740.7 188.2 L729 184.8 L719 183.2 L719 183.2 L712.3 184 L702.3 189 L692.3 200.7 L684 214 L675.7 224 L659 234 L639 240.7 L626.5 243.2 L612.3 244 L601.5 244.8 M685.7 212.3 L704 210.7 L712.3 211.5 L719 214 L719 214 L722.3 222.3 L734 229 L737.3 235.7 L742.3 237.3 L749 235.7 L759 236.5 L772.3 235.7 L789 237.3 L802.3 240.7 L812.3 244 L820.7 245.7 L839 254 L855.7 253.2 L869 258.2 L879 258.2 L895.7 255.7 L922.3 267.3 L949.8 272.7 M627.3 252.3 L639 255.7 L655.7 259 L674 262.3 L689 265.7 L700.7 272.3 L710.7 280.7 L719 287.3 L719 287.3 L722.3 292.3 M607.3 260.7 L620.7 267.3 L635.7 272.3 L652.3 277.3 L670.7 280.7 L677.3 287.3 L679.8 292.3 M534 289 L545.7 285.7 L557.3 284 L560.7 269" fill="none" stroke="#fda846" stroke-width="2.5" stroke-linejoin="round" stroke-linecap="round"/>
<text x="611.5" y="36.6" font-size="12" fill="#909090" text-anchor="middle" stroke="#fff" stroke-width="2.4" stroke-linejoin="round" paint-order="stroke">什邡市</text>
<text x="527.3" y="100.8" font-size="12" fill="#909090" text-anchor="middle" stroke="#fff" stroke-width="2.4" stroke-linejoin="round" paint-order="stroke">彭州市</text>
<text x="657.3" y="107.5" font-size="12" fill="#909090" text-anchor="middle" stroke="#fff" stroke-width="2.4" stroke-linejoin="round" paint-order="stroke">广汉市</text>
<text x="816.5" y="81.9" font-size="12" fill="#909090" text-anchor="middle" stroke="#fff" stroke-width="2.4" stroke-linejoin="round" paint-order="stroke" letter-spacing="0.8">中江县</text>
<text x="402.7" y="101.6" font-size="12" fill="#909090" text-anchor="middle" stroke="#fff" stroke-width="2.4" stroke-linejoin="round" paint-order="stroke" letter-spacing="0.3">都江堰市</text>
<text x="644.8" y="154.0" font-size="14" fill="#909090" text-anchor="middle" stroke="#fff" stroke-width="2.4" stroke-linejoin="round" paint-order="stroke">青白江区</text>
<text x="607.7" y="179.8" font-size="14" fill="#909090" text-anchor="middle" stroke="#fff" stroke-width="2.4" stroke-linejoin="round" paint-order="stroke">新都区</text>
<text x="504.3" y="192.7" font-size="14" fill="#909090" text-anchor="middle" stroke="#fff" stroke-width="2.4" stroke-linejoin="round" paint-order="stroke">郫都区</text>
<text x="710.7" y="161.0" font-size="12" fill="#909090" text-anchor="middle" stroke="#fff" stroke-width="2.4" stroke-linejoin="round" paint-order="stroke" letter-spacing="0.8">金堂县</text>
<text x="569.3" y="249.0" font-size="14" fill="#909090" text-anchor="middle" stroke="#fff" stroke-width="2.4" stroke-linejoin="round" paint-order="stroke">青羊区</text>
<text x="486" y="246.5" font-size="14" fill="#909090" text-anchor="middle" stroke="#fff" stroke-width="2.4" stroke-linejoin="round" paint-order="stroke">温江区</text>
<text x="413.2" y="269.1" font-size="12" fill="#909090" text-anchor="middle" stroke="#fff" stroke-width="2.4" stroke-linejoin="round" paint-order="stroke">崇州市</text>
<text x="513" y="298.0" font-size="14" fill="#909090" text-anchor="middle" stroke="#fff" stroke-width="2.4" stroke-linejoin="round" paint-order="stroke">双流区</text>
<text x="350" y="297.3" font-size="12" fill="#909090" text-anchor="middle" stroke="#fff" stroke-width="2.4" stroke-linejoin="round" paint-order="stroke" letter-spacing="0.8">大邑县</text>
<circle cx="699.8" cy="25.4" r="2.3" fill="#fbe3c0" stroke="#dd4a48" stroke-width="1"/><circle cx="699.8" cy="25.4" r="0.8" fill="#dd4a48"/>
<text x="707" y="31.6" font-size="15" fill="#3a3a3a" stroke="#fff" stroke-width="2.6" stroke-linejoin="round" paint-order="stroke">德阳</text>
<circle cx="567.8" cy="286" r="3.2" fill="#fff" stroke="#e0383d" stroke-width="1.2"/><circle cx="567.8" cy="286" r="1.4" fill="#e0383d"/>
<text x="578" y="293" font-size="14" font-weight="700" fill="#111" stroke="#fff" stroke-width="2.6" stroke-linejoin="round" paint-order="stroke">成都</text>
</svg>
<svg style="position:absolute;left:0;top:130px" width="949" height="94" viewBox="0 0 949 94" font-family='"Liberation Sans","Noto Sans CJK SC",sans-serif'><rect width="949" height="94" fill="#f7f7f7"/>
<path d="M342 0 L445.7 0 L447.3 4 L457.3 10.7 L462.3 19 L464.8 26.5 L463.2 35.7 L455.7 40.3 L449 35.7 L443.2 29.8 L441.5 37.3 L422.3 44 L409 53.2 L394 59.8 L385.7 67.3 L379 73.2 L374 70.7 L368.2 62.3 L361.5 64.8 L357.3 67.3 L354 79 L345.7 84.8 L337.3 90.7 L336.5 94 L335.7 87.3 L337.3 77.3 L339 69 L341.5 63.2 L340.7 44 L340 27.3 L341.3 10.7 Z M180.7 214.8 L188.2 217 L189 227.3 L210.7 224 L219 225.7 L221.5 234 L223.2 227 L232.3 224 L239 229 L244.8 230.7 L247.3 250.7 L231.5 266.5 L239 270.7 L245.7 275.7 L249 282.3 L247.3 287.3 L249 292.3 L154.8 292.3 L153.2 279 L149 274 L149 269.8 L154.8 264 L157.3 255.7 L165.7 245.7 L165.7 240.7 L169 239 L169 230.7 Z" fill="#b3ebb0"/>
<path d="M341 63.7 L336.5 69 L332.3 75.7 L334.3 82.3 L330.3 89.3 L336.5 94.3 L335.7 87.3 L337.3 77.3 L339 69 L342 64.3 Z M361.5 74 L372.3 71.5 L376 73.7 L370.7 77.3 L364 82.3 L356.5 84 L355.7 80.7 L359.8 78.2 Z" fill="#aacbfb"/>
<path d="M423.2 155.7 L428.2 174 M432.3 189 L434 200.7 M459 244 L460.7 257.3 M464 264 L469.8 272.3 L470.7 279 M374 74 L377.3 82.3 L385.7 85.7 L389 94 M402.3 120.7 L412.3 132.3 L417.3 142.3" fill="none" stroke="#b9d3fa" stroke-width="0.8" stroke-dasharray="6 3"/>
<path d="M397.3 94 L399 87.3 L403.2 82.3 M439 84 L437.3 100.7 L439 110.7 L435.7 127.3 L422.3 137.3 L412.3 140.7 L386.5 141.5 M469 72.3 L479 82.3 M472.3 124 L470.7 144 M385.7 144 L380.7 169 L359 202.3 L352.3 220.7 L358.2 232.3 L369 265.7 L363.2 274 L363.2 282.3 M384 152.3 L407.3 150.7 L415.7 144 M380.7 170.7 L389 184 L392.3 189 L414 187.3 L435.7 182.3 L445.7 178.2 L447.3 174 L460.7 154 M421.5 144 L425.7 164 L430.7 170.7 L445.7 177.3 L452.3 187.3 L464 207.3 L472.3 222.3 L477.3 232.3 M479 84 L485.7 94 L497.3 100.7 L500.7 109 L507.3 112.3 L525.7 114 M479 110.7 L489 102.3 L510.7 99.8 M479 124 L492.3 127.3 L504 135.7 L517.3 144 M479 59 L489 55.7 L490.7 50.7 L512.3 48.2 L535.7 48.2 L542.3 40.7 L545.7 22.3 L557.3 14.8 L579 11.5 L595.7 14 L610.7 10.7 M512.3 48.2 L514.8 74 L524 85.7 L527.3 92.3 M565.7 67.3 L567.3 77.3 L582.3 84.8 L585.7 77.3 L587.3 75.7 M567.3 77.3 L562.3 89 L559 90.7 M537.3 125.7 L555.7 120.7 L557.3 132.3 M617.3 42.3 L625.7 60.7 L639 77.3 L652.3 85.7 L667.3 87.3 M639 77.3 L634 87.3 L639 94 L652.3 100.7 M612.3 38.2 L622.3 44 L629.8 38.2 L625.7 34 M582.3 34 L595.7 34 M634 -1 L642.3 4 L655.7 0 M655.7 0 L658.2 19 L664 27.3 M682.3 29.8 L681.5 42.3 L689 47.3 M694 14 L689 12.3 L683.2 20.7 L682.3 29.8 M710.7 42.3 L709.8 60.7 L699 60.7 M700.7 72.3 L702.3 85.7 L694 97.3 L687.3 110.7 L679 120.7 M667.3 110.7 L675.7 120.7 L679 127.3 L690.7 132.3 M712.3 144 L719 140.7 M809.8 60.7 L820.7 61.5 L825.7 67.3 L829 84 M809.8 60.7 L812.3 72.3 L812.3 84 M804.8 97.3 L802.3 114 L797.3 127.3 M825.7 87.3 L830.7 100.7 M920.7 269 L925.7 277.3 L926.5 289 M935.7 264 L949.8 267.7 M479 160.7 L485.7 165.7 L489 177.3 M489 165.7 L509 177.3 L522.3 199 M529 199 L539 209 L545.7 219 L557.3 230.7 M520.7 236.5 L535.7 239 M479 247.3 L490.7 250.7 L495.7 259 M605.7 234 L624 210.7 L635.7 189 L654 170.7 L667.3 155.7 M635.7 159 L645.7 162.3 M609 267.3 L629 277.3 L639 287.3 M702.3 207.3 L705.7 199 L712.3 182.3 L714.8 174 L710.7 164 M550.7 155.7 L552.3 162.3 M545.7 255.7 L552.3 252.3 L572.3 250.7 L589.8 257.3 M572.3 250.7 L577.3 260.7 M520.7 275.7 L534 277.3 L549 268.2 M662.3 289 L672.3 282.3" fill="none" stroke="#fdebb6" stroke-width="1.2" stroke-linejoin="round"/>
<path d="M395.7 114 L389 127.3 L386.5 139 M399 107.3 L405.7 109 M427.3 124 L442.3 139 L464 142.3 L479 149.8 L464 144 L479 154" fill="none" stroke="#e6c3ca" stroke-width="2"/>
<path d="M395.7 114 L389 127.3 L386.5 139 M399 107.3 L405.7 109 M427.3 124 L442.3 139 L464 142.3 L479 149.8 L464 144 L479 154" fill="none" stroke="#fff" stroke-width="1.1"/>
<path d="M703.2 -1 L697.3 22.3 L679 47.3 L662.3 72.3 L652.3 89 L645.7 110.7 L639 124 L629 135.7 L624 144 M367.3 289 L377.3 279 L385.7 274 L405.7 273.2 L435.7 272 L447.3 268.2 L462.3 261.5 L475.7 258.2 L479 259.8 L479 259.8 L499 259 L519 259 L537.3 250.7 M517.3 100.7 L520.7 110.7 L519 122.3 L509 142.3 L509 144 L495.7 154 L479 159 M632.3 157.3 L627.3 165.7 L627.3 175.7 M610.7 210.7 L607.3 227.3 L604 260.7 L595.7 272.3 L572.3 275.7" fill="none" stroke="#e0b4be" stroke-width="2.8"/>
<path d="M703.2 -1 L697.3 22.3 L679 47.3 L662.3 72.3 L652.3 89 L645.7 110.7 L639 124 L629 135.7 L624 144 M367.3 289 L377.3 279 L385.7 274 L405.7 273.2 L435.7 272 L447.3 268.2 L462.3 261.5 L475.7 258.2 L479 259.8 L479 259.8 L499 259 L519 259 L537.3 250.7 M517.3 100.7 L520.7 110.7 L519 122.3 L509 142.3 L509 144 L495.7 154 L479 159 M632.3 157.3 L627.3 165.7 L627.3 175.7 M610.7 210.7 L607.3 227.3 L604 260.7 L595.7 272.3 L572.3 275.7" fill="none" stroke="#fff" stroke-width="1.8" stroke-dasharray="10 8"/>
<path d="M617.3 149 L605.7 157.3 L599 177.3 L592.3 192.3 L585.7 200.7 L572.3 210.7 L569.8 227.3 M569.8 229 L595.7 230.7 L610.7 226.5 L635.7 224 L655.7 218.2 L672.3 221.5 L684 227.3 L694 225.7 L704 232.3 L719 229.8 L719 229.8 L727.3 234 L733.2 244 L744 245.7 L742.3 259 L747.3 266.5 L739 269 L741.5 279 L740.7 289.8 M617.3 237.3 L627.3 236.5 L635.7 224 M679 47.3 L674 50.7 L669 60.7 M639 124 L629 135.7 L624 144 M562.3 277.3 L560.7 289" fill="none" stroke="#b7c1cf" stroke-width="2.4"/>
<path d="M617.3 149 L605.7 157.3 L599 177.3 L592.3 192.3 L585.7 200.7 L572.3 210.7 L569.8 227.3 M569.8 229 L595.7 230.7 L610.7 226.5 L635.7 224 L655.7 218.2 L672.3 221.5 L684 227.3 L694 225.7 L704 232.3 L719 229.8 L719 229.8 L727.3 234 L733.2 244 L744 245.7 L742.3 259 L747.3 266.5 L739 269 L741.5 279 L740.7 289.8 M617.3 237.3 L627.3 236.5 L635.7 224 M679 47.3 L674 50.7 L669 60.7 M639 124 L629 135.7 L624 144 M562.3 277.3 L560.7 289" fill="none" stroke="#fff" stroke-width="1.5" stroke-dasharray="10 8"/>
<path d="M0.3 108.2 L7.3 106 L14.8 104 L20.7 100.7 L32.3 99.3 L40.7 100.7 L50.7 99.3 L59 94 L65.7 94.5 L74 93.2 L79 90.7 L80.7 93.7 L89 92.3 M79 94.8 L87.3 99.8 L94 105.7 L99 114 L102.3 124 L105.7 134 L109 139.8 L115.7 143.2 L119 144 L119 145.7 L129 152.3 L132.3 147.3 L134.8 144 M134 157.3 L137.3 149 L140.7 144 L136.5 139 L140.7 141.5 L147.3 139.8 L150.7 132.3 L157.3 131.5 L164 128.2 L170.7 120.7 L172.3 114.8 L179 112 L184.8 106.5 L190.7 103.2 L197.3 98.7 L199 92.3 L207.3 85.7 L212.3 79 L224 70.7 L228.2 66.5 L231.5 57.3 L234 51.5 L239 49 L239 49.8 L247.3 43.2 L244.8 35.7 L250.7 33.2 L260.7 34.8 L265.7 44 L269.8 52.3 L279 61.5 L286.5 62.3 L294.8 56.5 L300.7 61.5 L307.3 61.5 L314 54 L322.3 54 L332.3 57.3 L339 60.7 M0.3 108.2 L2.3 114 L3.2 124 L4 135.7 L4.8 144 L0.7 144 L5.7 150.7 L15.7 152.3 L20.7 162.3 L24 170.7 L27.3 165.7 L30.7 154 L34.8 167.3 L44 166.5 L36.5 175.7 L34.8 194 L36.5 204 L43.2 212.3 L47.3 218.2 L44 227.3 L51.5 229 L43.2 232.3 L43.2 244 L48.2 248.2 L50.7 254.8 L64.8 259.8 L75.7 258.7 L84 264 L89.8 270.7 L92.3 279 L94.8 285.7 L98.2 291.5 M339 15.7 L337.3 35.7 L338.2 49 L339 60.7 M613.2 -1 L610.7 10.7 L611.5 17.3 L612.3 25.7 M610.7 10.7 L629 12.3 L639 17.3 L657.3 21.5 L664 27.3 L682.3 29.8 L694 29.8 L699 25.7 M607.3 39 L595.7 59 L587.3 75.7 M604.8 25.7 L612.3 21.5 L617.3 27.3 L614.8 38.2 L607.3 38.2 L604.8 25.7 M704.8 -1 L702.3 19 L695.7 29 L689 45.7 L682.3 60.7 L675.7 75.7 L667.3 90.7 L662.3 97.3 L655.7 109 L645.7 114 M689 47.3 L700.7 49 L710.7 48.2 M687.3 54 L699 57.3 M544 96.5 L554 94.8 L559 90.7 L562.3 92.3 M517.3 100.7 L524 109 L529 114 M479 65.7 L485.7 60.7 M662.3 97.3 L669 92.3 L676.5 95.7 M655.7 109 L658.2 117.3 M719 34 L724 39 L737.3 41.5 L744 31.5 L754 29.8 L760.7 32.3 L767.3 37.3 L775.7 39 L777.3 44 L784 50.7 L792.3 57.3 L799 55.7 L805.7 59 L806.5 67.3 L805.7 80.7 L804.8 97.3 M825.7 67.3 L835.7 60.7 L845.7 56.5 L857.3 51.5 L860.7 52.3 L874 50.7 L879 45.7 L885.7 37.3 L894 34.8 L901.5 31.5 L910.7 35.7 L917.3 39 L921.5 45.7 L934 43.2 L942.3 43.2 L949.8 45.3 M817.3 87.3 L822.3 94 L830.7 100.7 L834 110.7 L839 120.7 L849 132.3 L857.3 144 L857.3 144 L854 155.7 L859 165.7 L865.7 170.7 L874 170.7 L882.3 169.8 L892.3 174 L904 184 L907.3 199 L910.7 205.7 L922.3 208.2 L929 215.7 L933.2 229 L940.7 237.3 L949.8 244.8 M829 84 L819 86.5 L812.3 97.3 L807.3 109 L800.7 119 L794 130.7 L787.3 144 L785.7 150.7 L774 152.3 L765.7 150.7 L752.3 144.8 L747.3 141.5 L740.7 143.2 L735.7 149 L727.3 148.2 L719 144 L709 150.7 L700.7 152.3 L687.3 155.7 L675.7 154 M939 0 L947.3 7.3 L949 19 M389.8 109 L399 104 L405.7 104.8 L411.5 109 M547.3 144 L569 145.7 L589 150.7 L599 159 L603.2 165.7 M634 157.3 L645.7 162.3 L654 170.7 L659 182.3 L669 192.3 L679 199 L675.7 214 L677.3 222.3 M659 232.3 L660.7 244 L655.7 260.7 L642.3 274 L632.3 282.3 L629 289 M403.2 82.3 L419.8 74 L430.7 79 L445.7 82.3 L454 74.8 L462.3 75.7 L472.3 67.3 L479 64.8 M424 102.3 L439 109 L452.3 112.3 L464 120.7 L479 124" fill="none" stroke="#f8d788" stroke-width="3" stroke-linejoin="round"/>
<path d="M0.3 108.2 L7.3 106 L14.8 104 L20.7 100.7 L32.3 99.3 L40.7 100.7 L50.7 99.3 L59 94 L65.7 94.5 L74 93.2 L79 90.7 L80.7 93.7 L89 92.3 M79 94.8 L87.3 99.8 L94 105.7 L99 114 L102.3 124 L105.7 134 L109 139.8 L115.7 143.2 L119 144 L119 145.7 L129 152.3 L132.3 147.3 L134.8 144 M134 157.3 L137.3 149 L140.7 144 L136.5 139 L140.7 141.5 L147.3 139.8 L150.7 132.3 L157.3 131.5 L164 128.2 L170.7 120.7 L172.3 114.8 L179 112 L184.8 106.5 L190.7 103.2 L197.3 98.7 L199 92.3 L207.3 85.7 L212.3 79 L224 70.7 L228.2 66.5 L231.5 57.3 L234 51.5 L239 49 L239 49.8 L247.3 43.2 L244.8 35.7 L250.7 33.2 L260.7 34.8 L265.7 44 L269.8 52.3 L279 61.5 L286.5 62.3 L294.8 56.5 L300.7 61.5 L307.3 61.5 L314 54 L322.3 54 L332.3 57.3 L339 60.7 M0.3 108.2 L2.3 114 L3.2 124 L4 135.7 L4.8 144 L0.7 144 L5.7 150.7 L15.7 152.3 L20.7 162.3 L24 170.7 L27.3 165.7 L30.7 154 L34.8 167.3 L44 166.5 L36.5 175.7 L34.8 194 L36.5 204 L43.2 212.3 L47.3 218.2 L44 227.3 L51.5 229 L43.2 232.3 L43.2 244 L48.2 248.2 L50.7 254.8 L64.8 259.8 L75.7 258.7 L84 264 L89.8 270.7 L92.3 279 L94.8 285.7 L98.2 291.5 M339 15.7 L337.3 35.7 L338.2 49 L339 60.7 M613.2 -1 L610.7 10.7 L611.5 17.3 L612.3 25.7 M610.7 10.7 L629 12.3 L639 17.3 L657.3 21.5 L664 27.3 L682.3 29.8 L694 29.8 L699 25.7 M607.3 39 L595.7 59 L587.3 75.7 M604.8 25.7 L612.3 21.5 L617.3 27.3 L614.8 38.2 L607.3 38.2 L604.8 25.7 M704.8 -1 L702.3 19 L695.7 29 L689 45.7 L682.3 60.7 L675.7 75.7 L667.3 90.7 L662.3 97.3 L655.7 109 L645.7 114 M689 47.3 L700.7 49 L710.7 48.2 M687.3 54 L699 57.3 M544 96.5 L554 94.8 L559 90.7 L562.3 92.3 M517.3 100.7 L524 109 L529 114 M479 65.7 L485.7 60.7 M662.3 97.3 L669 92.3 L676.5 95.7 M655.7 109 L658.2 117.3 M719 34 L724 39 L737.3 41.5 L744 31.5 L754 29.8 L760.7 32.3 L767.3 37.3 L775.7 39 L777.3 44 L784 50.7 L792.3 57.3 L799 55.7 L805.7 59 L806.5 67.3 L805.7 80.7 L804.8 97.3 M825.7 67.3 L835.7 60.7 L845.7 56.5 L857.3 51.5 L860.7 52.3 L874 50.7 L879 45.7 L885.7 37.3 L894 34.8 L901.5 31.5 L910.7 35.7 L917.3 39 L921.5 45.7 L934 43.2 L942.3 43.2 L949.8 45.3 M817.3 87.3 L822.3 94 L830.7 100.7 L834 110.7 L839 120.7 L849 132.3 L857.3 144 L857.3 144 L854 155.7 L859 165.7 L865.7 170.7 L874 170.7 L882.3 169.8 L892.3 174 L904 184 L907.3 199 L910.7 205.7 L922.3 208.2 L929 215.7 L933.2 229 L940.7 237.3 L949.8 244.8 M829 84 L819 86.5 L812.3 97.3 L807.3 109 L800.7 119 L794 130.7 L787.3 144 L785.7 150.7 L774 152.3 L765.7 150.7 L752.3 144.8 L747.3 141.5 L740.7 143.2 L735.7 149 L727.3 148.2 L719 144 L709 150.7 L700.7 152.3 L687.3 155.7 L675.7 154 M939 0 L947.3 7.3 L949 19 M389.8 109 L399 104 L405.7 104.8 L411.5 109 M547.3 144 L569 145.7 L589 150.7 L599 159 L603.2 165.7 M634 157.3 L645.7 162.3 L654 170.7 L659 182.3 L669 192.3 L679 199 L675.7 214 L677.3 222.3 M659 232.3 L660.7 244 L655.7 260.7 L642.3 274 L632.3 282.3 L629 289 M403.2 82.3 L419.8 74 L430.7 79 L445.7 82.3 L454 74.8 L462.3 75.7 L472.3 67.3 L479 64.8 M424 102.3 L439 109 L452.3 112.3 L464 120.7 L479 124" fill="none" stroke="#fde8ac" stroke-width="1.3" stroke-linejoin="round"/>
<path d="M572.3 231.5 L572 250.7 L571.5 267.3 M554 250.7 L572.3 250.7 L590.7 250.7 M585.7 234.8 L595.7 221.5 M559 234.8 L549 227.3 L542.3 230.7 M557.3 262.3 L549 267.3 M583.2 266.5 L592.3 275.7 M590.7 254 L609 254 M538.2 250.7 L553.2 252.3 M595.7 221.5 L605.7 214 L612.3 203.2 M609.8 247.3 L626.5 248.2 M602.3 270.7 L612.3 277.3 L620.7 275.7 M549 267.3 L542.3 275.7 L532.3 279 M520.7 244 L538.2 247.3 M585.7 277.3 L589 287.3 L595.7 292.3 M629 270.7 L642.3 277.3 L652.3 285.7 L655.7 292.3 M628.2 260.7 L645.7 267.3 L662.3 275.7" fill="none" stroke="#fcd883" stroke-width="1.5" stroke-linejoin="round"/>
<path d="M538.2 244 L542.3 230.7 L557.3 219.8 L572.3 218.2 L595.7 221.5 L607.3 227.3 L609.8 240.7 L609 260.7 L602.3 270.7 L585.7 277.3 L565.7 276.5 L549 267.3 L540.7 257.3 L538.2 244 M554 247.3 L559 234.8 L572.3 231.5 L585.7 234.8 L590.7 247.3 L589.8 257.3 L583.2 266.5 L569 267.3 L557.3 262.3 L553.2 254 L554 247.3 M565.7 189.8 L566.5 200.7 L563.2 210.7 L564 217.3 M519 234.8 L529 239.8 L538.2 244 M422.3 289.8 L435.7 279 L455.7 276.5 L469 274 L479 269 L479 269 L489 263.2 L499 260.7 L519 259 M572.3 218.2 L574 225.7 L577.3 231.5 M571.5 267.3 L571.5 277.3 L570.7 290.7 M590.7 247.3 L600.7 242.3 L607.3 234 M524 273.2 L537.3 267.3 L549 267.3 M487.3 289 L492.3 270.7 L495.7 260.7" fill="none" stroke="#fcc254" stroke-width="2.6" stroke-linejoin="round" stroke-linecap="round"/>
<path d="M343.7 -1 L341.3 10.7 L340 27.3 L340.7 44 L341.5 59.8 L355.7 69 L360.7 78.2 L370.7 84.8 L380.7 91.5 L382 103.2 L386.5 110.7 L395.7 115.3 L411.5 110.7 L422.3 119.8 L435.7 129.8 L445.7 135.7 L454 144 L451.5 144.8 L460.7 150.7 L472.3 165.7 L479 172.7 L479 173.7 L489 181.5 L509 192.3 L520.3 204.3 M474 167.3 L454 188.2 L447.3 200.7 L440.7 212.3 L429 221.5 L425.7 230.7 L424.8 237.3 L432.3 249 L435.7 259 L437.3 270.7 L442.3 280.7 L450.7 289 L454.8 294.8 M363.2 283.2 L377.3 275.7 L387.3 269.8 L395.7 266.5 L403.2 258.2 L409 253.7 L429 250.7 L432.3 249 L452.3 240.7 L462.3 234 L475.7 223.2 L479 224 L479 224 L492.3 230.7 L504 231.5 L518.2 232.3 M565.7 292.3 L557.3 284.8 L545.7 282.7 L532.3 279 L524 272.3 L520.7 254 L518.2 230.7 L518.2 219 L519.8 204.8 L527.3 197.3 L534 193.7 L565.7 189.8 L587.3 189.8 L595.7 193.2 L612.3 203.2 L620.7 212.3 L625.7 219 L626.5 237.3 L627.3 252.3 L628.2 267.3 L620.7 275.7 L612.3 285.7 L608.2 292.3 M608.2 -1 L599 15.7 L585.7 32.3 L572.3 49 L564 65.7 L552.3 84 L542.3 97.3 L537.3 110.7 L535.3 122.3 L536.5 132.3 L540.7 144 L540.7 144 L545.7 157.3 L550.7 172.3 L557.3 182.3 L565.7 189.8 M527.3 115.7 L532.3 125.7 L536.5 134 M472.3 165.7 L479 161.5 L479 161.5 L492.3 159 L504 150.7 L522.3 144 L520.7 144 L535.7 137.3 L550.7 130.7 L562.3 124.8 L579 125.7 L595.7 123.2 L604 118.2 L625.7 113.2 L639 116.5 L644 123.2 L652.3 129 L670.7 137.3 L682.3 144 L682.3 144 L685.7 154 L685.7 165.7 L694 179 L700.7 188.2 L705.7 199 L707.7 210.7 L709 227.3 L714 242.3 L719 250.7 L719 250.7 L721.5 264 L725.7 274 L724.8 290.7 M717.7 -1 L715.7 27.3 L712.3 47.3 L700.7 52.3 L698.2 60.7 L699 69 L695.7 77.3 L685.7 84 L677.3 94 L667.3 109 L659 120.7 L649 129 L639 137.3 L632.3 144 L632.3 144 L632.3 157.3 L629.8 172.3 L624 184 L615.7 197.3 L610.7 210.7 L607.3 217.3 L600.7 223.2 L594 226.5 L585.7 228.2 M949.8 79.3 L935.7 86.5 L929 92.3 L915.7 93.2 L895.7 94.8 L869 94 L842.3 94 L835.7 95.7 L825.7 102.3 L814 114 L804 127.3 L795.7 144 L795.7 144 L790.7 159 L782.3 177.3 L770.7 184 L759 184.8 L740.7 188.2 L729 184.8 L719 183.2 L719 183.2 L712.3 184 L702.3 189 L692.3 200.7 L684 214 L675.7 224 L659 234 L639 240.7 L626.5 243.2 L612.3 244 L601.5 244.8 M685.7 212.3 L704 210.7 L712.3 211.5 L719 214 L719 214 L722.3 222.3 L734 229 L737.3 235.7 L742.3 237.3 L749 235.7 L759 236.5 L772.3 235.7 L789 237.3 L802.3 240.7 L812.3 244 L820.7 245.7 L839 254 L855.7 253.2 L869 258.2 L879 258.2 L895.7 255.7 L922.3 267.3 L949.8 272.7 M627.3 252.3 L639 255.7 L655.7 259 L674 262.3 L689 265.7 L700.7 272.3 L710.7 280.7 L719 287.3 L719 287.3 L722.3 292.3 M607.3 260.7 L620.7 267.3 L635.7 272.3 L652.3 277.3 L670.7 280.7 L677.3 287.3 L679.8 292.3 M534 289 L545.7 285.7 L557.3 284 L560.7 269" fill="none" stroke="#f49b35" stroke-width="3.9" stroke-linejoin="round" stroke-linecap="round"/>
<path d="M343.7 -1 L341.3 10.7 L340 27.3 L340.7 44 L341.5 59.8 L355.7 69 L360.7 78.2 L370.7 84.8 L380.7 91.5 L382 103.2 L386.5 110.7 L395.7 115.3 L411.5 110.7 L422.3 119.8 L435.7 129.8 L445.7 135.7 L454 144 L451.5 144.8 L460.7 150.7 L472.3 165.7 L479 172.7 L479 173.7 L489 181.5 L509 192.3 L520.3 204.3 M474 167.3 L454 188.2 L447.3 200.7 L440.7 212.3 L429 221.5 L425.7 230.7 L424.8 237.3 L432.3 249 L435.7 259 L437.3 270.7 L442.3 280.7 L450.7 289 L454.8 294.8 M363.2 283.2 L377.3 275.7 L387.3 269.8 L395.7 266.5 L403.2 258.2 L409 253.7 L429 250.7 L432.3 249 L452.3 240.7 L462.3 234 L475.7 223.2 L479 224 L479 224 L492.3 230.7 L504 231.5 L518.2 232.3 M565.7 292.3 L557.3 284.8 L545.7 282.7 L532.3 279 L524 272.3 L520.7 254 L518.2 230.7 L518.2 219 L519.8 204.8 L527.3 197.3 L534 193.7 L565.7 189.8 L587.3 189.8 L595.7 193.2 L612.3 203.2 L620.7 212.3 L625.7 219 L626.5 237.3 L627.3 252.3 L628.2 267.3 L620.7 275.7 L612.3 285.7 L608.2 292.3 M608.2 -1 L599 15.7 L585.7 32.3 L572.3 49 L564 65.7 L552.3 84 L542.3 97.3 L537.3 110.7 L535.3 122.3 L536.5 132.3 L540.7 144 L540.7 144 L545.7 157.3 L550.7 172.3 L557.3 182.3 L565.7 189.8 M527.3 115.7 L532.3 125.7 L536.5 134 M472.3 165.7 L479 161.5 L479 161.5 L492.3 159 L504 150.7 L522.3 144 L520.7 144 L535.7 137.3 L550.7 130.7 L562.3 124.8 L579 125.7 L595.7 123.2 L604 118.2 L625.7 113.2 L639 116.5 L644 123.2 L652.3 129 L670.7 137.3 L682.3 144 L682.3 144 L685.7 154 L685.7 165.7 L694 179 L700.7 188.2 L705.7 199 L707.7 210.7 L709 227.3 L714 242.3 L719 250.7 L719 250.7 L721.5 264 L725.7 274 L724.8 290.7 M717.7 -1 L715.7 27.3 L712.3 47.3 L700.7 52.3 L698.2 60.7 L699 69 L695.7 77.3 L685.7 84 L677.3 94 L667.3 109 L659 120.7 L649 129 L639 137.3 L632.3 144 L632.3 144 L632.3 157.3 L629.8 172.3 L624 184 L615.7 197.3 L610.7 210.7 L607.3 217.3 L600.7 223.2 L594 226.5 L585.7 228.2 M949.8 79.3 L935.7 86.5 L929 92.3 L915.7 93.2 L895.7 94.8 L869 94 L842.3 94 L835.7 95.7 L825.7 102.3 L814 114 L804 127.3 L795.7 144 L795.7 144 L790.7 159 L782.3 177.3 L770.7 184 L759 184.8 L740.7 188.2 L729 184.8 L719 183.2 L719 183.2 L712.3 184 L702.3 189 L692.3 200.7 L684 214 L675.7 224 L659 234 L639 240.7 L626.5 243.2 L612.3 244 L601.5 244.8 M685.7 212.3 L704 210.7 L712.3 211.5 L719 214 L719 214 L722.3 222.3 L734 229 L737.3 235.7 L742.3 237.3 L749 235.7 L759 236.5 L772.3 235.7 L789 237.3 L802.3 240.7 L812.3 244 L820.7 245.7 L839 254 L855.7 253.2 L869 258.2 L879 258.2 L895.7 255.7 L922.3 267.3 L949.8 272.7 M627.3 252.3 L639 255.7 L655.7 259 L674 262.3 L689 265.7 L700.7 272.3 L710.7 280.7 L719 287.3 L719 287.3 L722.3 292.3 M607.3 260.7 L620.7 267.3 L635.7 272.3 L652.3 277.3 L670.7 280.7 L677.3 287.3 L679.8 292.3 M534 289 L545.7 285.7 L557.3 284 L560.7 269" fill="none" stroke="#fda846" stroke-width="2.5" stroke-linejoin="round" stroke-linecap="round"/>
<text x="611.5" y="36.6" font-size="12" fill="#909090" text-anchor="middle" stroke="#fff" stroke-width="2.4" stroke-linejoin="round" paint-order="stroke">什邡市</text>
<text x="527.3" y="100.8" font-size="12" fill="#909090" text-anchor="middle" stroke="#fff" stroke-width="2.4" stroke-linejoin="round" paint-order="stroke">彭州市</text>
<text x="657.3" y="107.5" font-size="12" fill="#909090" text-anchor="middle" stroke="#fff" stroke-width="2.4" stroke-linejoin="round" paint-order="stroke">广汉市</text>
<text x="816.5" y="81.9" font-size="12" fill="#909090" text-anchor="middle" stroke="#fff" stroke-width="2.4" stroke-linejoin="round" paint-order="stroke" letter-spacing="0.8">中江县</text>
<text x="402.7" y="101.6" font-size="12" fill="#909090" text-anchor="middle" stroke="#fff" stroke-width="2.4" stroke-linejoin="round" paint-order="stroke" letter-spacing="0.3">都江堰市</text>
<text x="644.8" y="154.0" font-size="14" fill="#909090" text-anchor="middle" stroke="#fff" stroke-width="2.4" stroke-linejoin="round" paint-order="stroke">青白江区</text>
<text x="607.7" y="179.8" font-size="14" fill="#909090" text-anchor="middle" stroke="#fff" stroke-width="2.4" stroke-linejoin="round" paint-order="stroke">新都区</text>
<text x="504.3" y="192.7" font-size="14" fill="#909090" text-anchor="middle" stroke="#fff" stroke-width="2.4" stroke-linejoin="round" paint-order="stroke">郫都区</text>
<text x="710.7" y="161.0" font-size="12" fill="#909090" text-anchor="middle" stroke="#fff" stroke-width="2.4" stroke-linejoin="round" paint-order="stroke" letter-spacing="0.8">金堂县</text>
<text x="569.3" y="249.0" font-size="14" fill="#909090" text-anchor="middle" stroke="#fff" stroke-width="2.4" stroke-linejoin="round" paint-order="stroke">青羊区</text>
<text x="486" y="246.5" font-size="14" fill="#909090" text-anchor="middle" stroke="#fff" stroke-width="2.4" stroke-linejoin="round" paint-order="stroke">温江区</text>
<text x="413.2" y="269.1" font-size="12" fill="#909090" text-anchor="middle" stroke="#fff" stroke-width="2.4" stroke-linejoin="round" paint-order="stroke">崇州市</text>
<text x="513" y="298.0" font-size="14" fill="#909090" text-anchor="middle" stroke="#fff" stroke-width="2.4" stroke-linejoin="round" paint-order="stroke">双流区</text>
<text x="350" y="297.3" font-size="12" fill="#909090" text-anchor="middle" stroke="#fff" stroke-width="2.4" stroke-linejoin="round" paint-order="stroke" letter-spacing="0.8">大邑县</text>
<circle cx="699.8" cy="25.4" r="2.3" fill="#fbe3c0" stroke="#dd4a48" stroke-width="1"/><circle cx="699.8" cy="25.4" r="0.8" fill="#dd4a48"/>
<text x="707" y="31.6" font-size="15" fill="#3a3a3a" stroke="#fff" stroke-width="2.6" stroke-linejoin="round" paint-order="stroke">德阳</text>
<circle cx="567.8" cy="286" r="3.2" fill="#fff" stroke="#e0383d" stroke-width="1.2"/><circle cx="567.8" cy="286" r="1.4" fill="#e0383d"/>
<text x="578" y="293" font-size="14" font-weight="700" fill="#111" stroke="#fff" stroke-width="2.6" stroke-linejoin="round" paint-order="stroke">成都</text>
</svg>
<svg style="position:absolute;left:0;top:224px" width="949" height="289" viewBox="0 0 949 289" font-family='"Liberation Sans","Noto Sans CJK SC",sans-serif'><rect width="949" height="289" fill="#f7f7f7"/>
<path d="M342 0 L445.7 0 L447.3 4 L457.3 10.7 L462.3 19 L464.8 26.5 L463.2 35.7 L455.7 40.3 L449 35.7 L443.2 29.8 L441.5 37.3 L422.3 44 L409 53.2 L394 59.8 L385.7 67.3 L379 73.2 L374 70.7 L368.2 62.3 L361.5 64.8 L357.3 67.3 L354 79 L345.7 84.8 L337.3 90.7 L336.5 94 L335.7 87.3 L337.3 77.3 L339 69 L341.5 63.2 L340.7 44 L340 27.3 L341.3 10.7 Z M180.7 214.8 L188.2 217 L189 227.3 L210.7 224 L219 225.7 L221.5 234 L223.2 227 L232.3 224 L239 229 L244.8 230.7 L247.3 250.7 L231.5 266.5 L239 270.7 L245.7 275.7 L249 282.3 L247.3 287.3 L249 292.3 L154.8 292.3 L153.2 279 L149 274 L149 269.8 L154.8 264 L157.3 255.7 L165.7 245.7 L165.7 240.7 L169 239 L169 230.7 Z" fill="#b3ebb0"/>
<path d="M341 63.7 L336.5 69 L332.3 75.7 L334.3 82.3 L330.3 89.3 L336.5 94.3 L335.7 87.3 L337.3 77.3 L339 69 L342 64.3 Z M361.5 74 L372.3 71.5 L376 73.7 L370.7 77.3 L364 82.3 L356.5 84 L355.7 80.7 L359.8 78.2 Z" fill="#aacbfb"/>
<path d="M423.2 155.7 L428.2 174 M432.3 189 L434 200.7 M459 244 L460.7 257.3 M464 264 L469.8 272.3 L470.7 279 M374 74 L377.3 82.3 L385.7 85.7 L389 94 M402.3 120.7 L412.3 132.3 L417.3 142.3" fill="none" stroke="#b9d3fa" stroke-width="0.8" stroke-dasharray="6 3"/>
<path d="M397.3 94 L399 87.3 L403.2 82.3 M439 84 L437.3 100.7 L439 110.7 L435.7 127.3 L422.3 137.3 L412.3 140.7 L386.5 141.5 M469 72.3 L479 82.3 M472.3 124 L470.7 144 M385.7 144 L380.7 169 L359 202.3 L352.3 220.7 L358.2 232.3 L369 265.7 L363.2 274 L363.2 282.3 M384 152.3 L407.3 150.7 L415.7 144 M380.7 170.7 L389 184 L392.3 189 L414 187.3 L435.7 182.3 L445.7 178.2 L447.3 174 L460.7 154 M421.5 144 L425.7 164 L430.7 170.7 L445.7 177.3 L452.3 187.3 L464 207.3 L472.3 222.3 L477.3 232.3 M479 84 L485.7 94 L497.3 100.7 L500.7 109 L507.3 112.3 L525.7 114 M479 110.7 L489 102.3 L510.7 99.8 M479 124 L492.3 127.3 L504 135.7 L517.3 144 M479 59 L489 55.7 L490.7 50.7 L512.3 48.2 L535.7 48.2 L542.3 40.7 L545.7 22.3 L557.3 14.8 L579 11.5 L595.7 14 L610.7 10.7 M512.3 48.2 L514.8 74 L524 85.7 L527.3 92.3 M565.7 67.3 L567.3 77.3 L582.3 84.8 L585.7 77.3 L587.3 75.7 M567.3 77.3 L562.3 89 L559 90.7 M537.3 125.7 L555.7 120.7 L557.3 132.3 M617.3 42.3 L625.7 60.7 L639 77.3 L652.3 85.7 L667.3 87.3 M639 77.3 L634 87.3 L639 94 L652.3 100.7 M612.3 38.2 L622.3 44 L629.8 38.2 L625.7 34 M582.3 34 L595.7 34 M634 -1 L642.3 4 L655.7 0 M655.7 0 L658.2 19 L664 27.3 M682.3 29.8 L681.5 42.3 L689 47.3 M694 14 L689 12.3 L683.2 20.7 L682.3 29.8 M710.7 42.3 L709.8 60.7 L699 60.7 M700.7 72.3 L702.3 85.7 L694 97.3 L687.3 110.7 L679 120.7 M667.3 110.7 L675.7 120.7 L679 127.3 L690.7 132.3 M712.3 144 L719 140.7 M809.8 60.7 L820.7 61.5 L825.7 67.3 L829 84 M809.8 60.7 L812.3 72.3 L812.3 84 M804.8 97.3 L802.3 114 L797.3 127.3 M825.7 87.3 L830.7 100.7 M920.7 269 L925.7 277.3 L926.5 289 M935.7 264 L949.8 267.7 M479 160.7 L485.7 165.7 L489 177.3 M489 165.7 L509 177.3 L522.3 199 M529 199 L539 209 L545.7 219 L557.3 230.7 M520.7 236.5 L535.7 239 M479 247.3 L490.7 250.7 L495.7 259 M605.7 234 L624 210.7 L635.7 189 L654 170.7 L667.3 155.7 M635.7 159 L645.7 162.3 M609 267.3 L629 277.3 L639 287.3 M702.3 207.3 L705.7 199 L712.3 182.3 L714.8 174 L710.7 164 M550.7 155.7 L552.3 162.3 M545.7 255.7 L552.3 252.3 L572.3 250.7 L589.8 257.3 M572.3 250.7 L577.3 260.7 M520.7 275.7 L534 277.3 L549 268.2 M662.3 289 L672.3 282.3" fill="none" stroke="#fdebb6" stroke-width="1.2" stroke-linejoin="round"/>
<path d="M395.7 114 L389 127.3 L386.5 139 M399 107.3 L405.7 109 M427.3 124 L442.3 139 L464 142.3 L479 149.8 L464 144 L479 154" fill="none" stroke="#e6c3ca" stroke-width="2"/>
<path d="M395.7 114 L389 127.3 L386.5 139 M399 107.3 L405.7 109 M427.3 124 L442.3 139 L464 142.3 L479 149.8 L464 144 L479 154" fill="none" stroke="#fff" stroke-width="1.1"/>
<path d="M703.2 -1 L697.3 22.3 L679 47.3 L662.3 72.3 L652.3 89 L645.7 110.7 L639 124 L629 135.7 L624 144 M367.3 289 L377.3 279 L385.7 274 L405.7 273.2 L435.7 272 L447.3 268.2 L462.3 261.5 L475.7 258.2 L479 259.8 L479 259.8 L499 259 L519 259 L537.3 250.7 M517.3 100.7 L520.7 110.7 L519 122.3 L509 142.3 L509 144 L495.7 154 L479 159 M632.3 157.3 L627.3 165.7 L627.3 175.7 M610.7 210.7 L607.3 227.3 L604 260.7 L595.7 272.3 L572.3 275.7" fill="none" stroke="#e0b4be" stroke-width="2.8"/>
<path d="M703.2 -1 L697.3 22.3 L679 47.3 L662.3 72.3 L652.3 89 L645.7 110.7 L639 124 L629 135.7 L624 144 M367.3 289 L377.3 279 L385.7 274 L405.7 273.2 L435.7 272 L447.3 268.2 L462.3 261.5 L475.7 258.2 L479 259.8 L479 259.8 L499 259 L519 259 L537.3 250.7 M517.3 100.7 L520.7 110.7 L519 122.3 L509 142.3 L509 144 L495.7 154 L479 159 M632.3 157.3 L627.3 165.7 L627.3 175.7 M610.7 210.7 L607.3 227.3 L604 260.7 L595.7 272.3 L572.3 275.7" fill="none" stroke="#fff" stroke-width="1.8" stroke-dasharray="10 8"/>
<path d="M617.3 149 L605.7 157.3 L599 177.3 L592.3 192.3 L585.7 200.7 L572.3 210.7 L569.8 227.3 M569.8 229 L595.7 230.7 L610.7 226.5 L635.7 224 L655.7 218.2 L672.3 221.5 L684 227.3 L694 225.7 L704 232.3 L719 229.8 L719 229.8 L727.3 234 L733.2 244 L744 245.7 L742.3 259 L747.3 266.5 L739 269 L741.5 279 L740.7 289.8 M617.3 237.3 L627.3 236.5 L635.7 224 M679 47.3 L674 50.7 L669 60.7 M639 124 L629 135.7 L624 144 M562.3 277.3 L560.7 289" fill="none" stroke="#b7c1cf" stroke-width="2.4"/>
<path d="M617.3 149 L605.7 157.3 L599 177.3 L592.3 192.3 L585.7 200.7 L572.3 210.7 L569.8 227.3 M569.8 229 L595.7 230.7 L610.7 226.5 L635.7 224 L655.7 218.2 L672.3 221.5 L684 227.3 L694 225.7 L704 232.3 L719 229.8 L719 229.8 L727.3 234 L733.2 244 L744 245.7 L742.3 259 L747.3 266.5 L739 269 L741.5 279 L740.7 289.8 M617.3 237.3 L627.3 236.5 L635.7 224 M679 47.3 L674 50.7 L669 60.7 M639 124 L629 135.7 L624 144 M562.3 277.3 L560.7 289" fill="none" stroke="#fff" stroke-width="1.5" stroke-dasharray="10 8"/>
<path d="M0.3 108.2 L7.3 106 L14.8 104 L20.7 100.7 L32.3 99.3 L40.7 100.7 L50.7 99.3 L59 94 L65.7 94.5 L74 93.2 L79 90.7 L80.7 93.7 L89 92.3 M79 94.8 L87.3 99.8 L94 105.7 L99 114 L102.3 124 L105.7 134 L109 139.8 L115.7 143.2 L119 144 L119 145.7 L129 152.3 L132.3 147.3 L134.8 144 M134 157.3 L137.3 149 L140.7 144 L136.5 139 L140.7 141.5 L147.3 139.8 L150.7 132.3 L157.3 131.5 L164 128.2 L170.7 120.7 L172.3 114.8 L179 112 L184.8 106.5 L190.7 103.2 L197.3 98.7 L199 92.3 L207.3 85.7 L212.3 79 L224 70.7 L228.2 66.5 L231.5 57.3 L234 51.5 L239 49 L239 49.8 L247.3 43.2 L244.8 35.7 L250.7 33.2 L260.7 34.8 L265.7 44 L269.8 52.3 L279 61.5 L286.5 62.3 L294.8 56.5 L300.7 61.5 L307.3 61.5 L314 54 L322.3 54 L332.3 57.3 L339 60.7 M0.3 108.2 L2.3 114 L3.2 124 L4 135.7 L4.8 144 L0.7 144 L5.7 150.7 L15.7 152.3 L20.7 162.3 L24 170.7 L27.3 165.7 L30.7 154 L34.8 167.3 L44 166.5 L36.5 175.7 L34.8 194 L36.5 204 L43.2 212.3 L47.3 218.2 L44 227.3 L51.5 229 L43.2 232.3 L43.2 244 L48.2 248.2 L50.7 254.8 L64.8 259.8 L75.7 258.7 L84 264 L89.8 270.7 L92.3 279 L94.8 285.7 L98.2 291.5 M339 15.7 L337.3 35.7 L338.2 49 L339 60.7 M613.2 -1 L610.7 10.7 L611.5 17.3 L612.3 25.7 M610.7 10.7 L629 12.3 L639 17.3 L657.3 21.5 L664 27.3 L682.3 29.8 L694 29.8 L699 25.7 M607.3 39 L595.7 59 L587.3 75.7 M604.8 25.7 L612.3 21.5 L617.3 27.3 L614.8 38.2 L607.3 38.2 L604.8 25.7 M704.8 -1 L702.3 19 L695.7 29 L689 45.7 L682.3 60.7 L675.7 75.7 L667.3 90.7 L662.3 97.3 L655.7 109 L645.7 114 M689 47.3 L700.7 49 L710.7 48.2 M687.3 54 L699 57.3 M544 96.5 L554 94.8 L559 90.7 L562.3 92.3 M517.3 100.7 L524 109 L529 114 M479 65.7 L485.7 60.7 M662.3 97.3 L669 92.3 L676.5 95.7 M655.7 109 L658.2 117.3 M719 34 L724 39 L737.3 41.5 L744 31.5 L754 29.8 L760.7 32.3 L767.3 37.3 L775.7 39 L777.3 44 L784 50.7 L792.3 57.3 L799 55.7 L805.7 59 L806.5 67.3 L805.7 80.7 L804.8 97.3 M825.7 67.3 L835.7 60.7 L845.7 56.5 L857.3 51.5 L860.7 52.3 L874 50.7 L879 45.7 L885.7 37.3 L894 34.8 L901.5 31.5 L910.7 35.7 L917.3 39 L921.5 45.7 L934 43.2 L942.3 43.2 L949.8 45.3 M817.3 87.3 L822.3 94 L830.7 100.7 L834 110.7 L839 120.7 L849 132.3 L857.3 144 L857.3 144 L854 155.7 L859 165.7 L865.7 170.7 L874 170.7 L882.3 169.8 L892.3 174 L904 184 L907.3 199 L910.7 205.7 L922.3 208.2 L929 215.7 L933.2 229 L940.7 237.3 L949.8 244.8 M829 84 L819 86.5 L812.3 97.3 L807.3 109 L800.7 119 L794 130.7 L787.3 144 L785.7 150.7 L774 152.3 L765.7 150.7 L752.3 144.8 L747.3 141.5 L740.7 143.2 L735.7 149 L727.3 148.2 L719 144 L709 150.7 L700.7 152.3 L687.3 155.7 L675.7 154 M939 0 L947.3 7.3 L949 19 M389.8 109 L399 104 L405.7 104.8 L411.5 109 M547.3 144 L569 145.7 L589 150.7 L599 159 L603.2 165.7 M634 157.3 L645.7 162.3 L654 170.7 L659 182.3 L669 192.3 L679 199 L675.7 214 L677.3 222.3 M659 232.3 L660.7 244 L655.7 260.7 L642.3 274 L632.3 282.3 L629 289 M403.2 82.3 L419.8 74 L430.7 79 L445.7 82.3 L454 74.8 L462.3 75.7 L472.3 67.3 L479 64.8 M424 102.3 L439 109 L452.3 112.3 L464 120.7 L479 124" fill="none" stroke="#f8d788" stroke-width="3" stroke-linejoin="round"/>
<path d="M0.3 108.2 L7.3 106 L14.8 104 L20.7 100.7 L32.3 99.3 L40.7 100.7 L50.7 99.3 L59 94 L65.7 94.5 L74 93.2 L79 90.7 L80.7 93.7 L89 92.3 M79 94.8 L87.3 99.8 L94 105.7 L99 114 L102.3 124 L105.7 134 L109 139.8 L115.7 143.2 L119 144 L119 145.7 L129 152.3 L132.3 147.3 L134.8 144 M134 157.3 L137.3 149 L140.7 144 L136.5 139 L140.7 141.5 L147.3 139.8 L150.7 132.3 L157.3 131.5 L164 128.2 L170.7 120.7 L172.3 114.8 L179 112 L184.8 106.5 L190.7 103.2 L197.3 98.7 L199 92.3 L207.3 85.7 L212.3 79 L224 70.7 L228.2 66.5 L231.5 57.3 L234 51.5 L239 49 L239 49.8 L247.3 43.2 L244.8 35.7 L250.7 33.2 L260.7 34.8 L265.7 44 L269.8 52.3 L279 61.5 L286.5 62.3 L294.8 56.5 L300.7 61.5 L307.3 61.5 L314 54 L322.3 54 L332.3 57.3 L339 60.7 M0.3 108.2 L2.3 114 L3.2 124 L4 135.7 L4.8 144 L0.7 144 L5.7 150.7 L15.7 152.3 L20.7 162.3 L24 170.7 L27.3 165.7 L30.7 154 L34.8 167.3 L44 166.5 L36.5 175.7 L34.8 194 L36.5 204 L43.2 212.3 L47.3 218.2 L44 227.3 L51.5 229 L43.2 232.3 L43.2 244 L48.2 248.2 L50.7 254.8 L64.8 259.8 L75.7 258.7 L84 264 L89.8 270.7 L92.3 279 L94.8 285.7 L98.2 291.5 M339 15.7 L337.3 35.7 L338.2 49 L339 60.7 M613.2 -1 L610.7 10.7 L611.5 17.3 L612.3 25.7 M610.7 10.7 L629 12.3 L639 17.3 L657.3 21.5 L664 27.3 L682.3 29.8 L694 29.8 L699 25.7 M607.3 39 L595.7 59 L587.3 75.7 M604.8 25.7 L612.3 21.5 L617.3 27.3 L614.8 38.2 L607.3 38.2 L604.8 25.7 M704.8 -1 L702.3 19 L695.7 29 L689 45.7 L682.3 60.7 L675.7 75.7 L667.3 90.7 L662.3 97.3 L655.7 109 L645.7 114 M689 47.3 L700.7 49 L710.7 48.2 M687.3 54 L699 57.3 M544 96.5 L554 94.8 L559 90.7 L562.3 92.3 M517.3 100.7 L524 109 L529 114 M479 65.7 L485.7 60.7 M662.3 97.3 L669 92.3 L676.5 95.7 M655.7 109 L658.2 117.3 M719 34 L724 39 L737.3 41.5 L744 31.5 L754 29.8 L760.7 32.3 L767.3 37.3 L775.7 39 L777.3 44 L784 50.7 L792.3 57.3 L799 55.7 L805.7 59 L806.5 67.3 L805.7 80.7 L804.8 97.3 M825.7 67.3 L835.7 60.7 L845.7 56.5 L857.3 51.5 L860.7 52.3 L874 50.7 L879 45.7 L885.7 37.3 L894 34.8 L901.5 31.5 L910.7 35.7 L917.3 39 L921.5 45.7 L934 43.2 L942.3 43.2 L949.8 45.3 M817.3 87.3 L822.3 94 L830.7 100.7 L834 110.7 L839 120.7 L849 132.3 L857.3 144 L857.3 144 L854 155.7 L859 165.7 L865.7 170.7 L874 170.7 L882.3 169.8 L892.3 174 L904 184 L907.3 199 L910.7 205.7 L922.3 208.2 L929 215.7 L933.2 229 L940.7 237.3 L949.8 244.8 M829 84 L819 86.5 L812.3 97.3 L807.3 109 L800.7 119 L794 130.7 L787.3 144 L785.7 150.7 L774 152.3 L765.7 150.7 L752.3 144.8 L747.3 141.5 L740.7 143.2 L735.7 149 L727.3 148.2 L719 144 L709 150.7 L700.7 152.3 L687.3 155.7 L675.7 154 M939 0 L947.3 7.3 L949 19 M389.8 109 L399 104 L405.7 104.8 L411.5 109 M547.3 144 L569 145.7 L589 150.7 L599 159 L603.2 165.7 M634 157.3 L645.7 162.3 L654 170.7 L659 182.3 L669 192.3 L679 199 L675.7 214 L677.3 222.3 M659 232.3 L660.7 244 L655.7 260.7 L642.3 274 L632.3 282.3 L629 289 M403.2 82.3 L419.8 74 L430.7 79 L445.7 82.3 L454 74.8 L462.3 75.7 L472.3 67.3 L479 64.8 M424 102.3 L439 109 L452.3 112.3 L464 120.7 L479 124" fill="none" stroke="#fde8ac" stroke-width="1.3" stroke-linejoin="round"/>
<path d="M572.3 231.5 L572 250.7 L571.5 267.3 M554 250.7 L572.3 250.7 L590.7 250.7 M585.7 234.8 L595.7 221.5 M559 234.8 L549 227.3 L542.3 230.7 M557.3 262.3 L549 267.3 M583.2 266.5 L592.3 275.7 M590.7 254 L609 254 M538.2 250.7 L553.2 252.3 M595.7 221.5 L605.7 214 L612.3 203.2 M609.8 247.3 L626.5 248.2 M602.3 270.7 L612.3 277.3 L620.7 275.7 M549 267.3 L542.3 275.7 L532.3 279 M520.7 244 L538.2 247.3 M585.7 277.3 L589 287.3 L595.7 292.3 M629 270.7 L642.3 277.3 L652.3 285.7 L655.7 292.3 M628.2 260.7 L645.7 267.3 L662.3 275.7" fill="none" stroke="#fcd883" stroke-width="1.5" stroke-linejoin="round"/>
<path d="M538.2 244 L542.3 230.7 L557.3 219.8 L572.3 218.2 L595.7 221.5 L607.3 227.3 L609.8 240.7 L609 260.7 L602.3 270.7 L585.7 277.3 L565.7 276.5 L549 267.3 L540.7 257.3 L538.2 244 M554 247.3 L559 234.8 L572.3 231.5 L585.7 234.8 L590.7 247.3 L589.8 257.3 L583.2 266.5 L569 267.3 L557.3 262.3 L553.2 254 L554 247.3 M565.7 189.8 L566.5 200.7 L563.2 210.7 L564 217.3 M519 234.8 L529 239.8 L538.2 244 M422.3 289.8 L435.7 279 L455.7 276.5 L469 274 L479 269 L479 269 L489 263.2 L499 260.7 L519 259 M572.3 218.2 L574 225.7 L577.3 231.5 M571.5 267.3 L571.5 277.3 L570.7 290.7 M590.7 247.3 L600.7 242.3 L607.3 234 M524 273.2 L537.3 267.3 L549 267.3 M487.3 289 L492.3 270.7 L495.7 260.7" fill="none" stroke="#fcc254" stroke-width="2.6" stroke-linejoin="round" stroke-linecap="round"/>
<path d="M343.7 -1 L341.3 10.7 L340 27.3 L340.7 44 L341.5 59.8 L355.7 69 L360.7 78.2 L370.7 84.8 L380.7 91.5 L382 103.2 L386.5 110.7 L395.7 115.3 L411.5 110.7 L422.3 119.8 L435.7 129.8 L445.7 135.7 L454 144 L451.5 144.8 L460.7 150.7 L472.3 165.7 L479 172.7 L479 173.7 L489 181.5 L509 192.3 L520.3 204.3 M474 167.3 L454 188.2 L447.3 200.7 L440.7 212.3 L429 221.5 L425.7 230.7 L424.8 237.3 L432.3 249 L435.7 259 L437.3 270.7 L442.3 280.7 L450.7 289 L454.8 294.8 M363.2 283.2 L377.3 275.7 L387.3 269.8 L395.7 266.5 L403.2 258.2 L409 253.7 L429 250.7 L432.3 249 L452.3 240.7 L462.3 234 L475.7 223.2 L479 224 L479 224 L492.3 230.7 L504 231.5 L518.2 232.3 M565.7 292.3 L557.3 284.8 L545.7 282.7 L532.3 279 L524 272.3 L520.7 254 L518.2 230.7 L518.2 219 L519.8 204.8 L527.3 197.3 L534 193.7 L565.7 189.8 L587.3 189.8 L595.7 193.2 L612.3 203.2 L620.7 212.3 L625.7 219 L626.5 237.3 L627.3 252.3 L628.2 267.3 L620.7 275.7 L612.3 285.7 L608.2 292.3 M608.2 -1 L599 15.7 L585.7 32.3 L572.3 49 L564 65.7 L552.3 84 L542.3 97.3 L537.3 110.7 L535.3 122.3 L536.5 132.3 L540.7 144 L540.7 144 L545.7 157.3 L550.7 172.3 L557.3 182.3 L565.7 189.8 M527.3 115.7 L532.3 125.7 L536.5 134 M472.3 165.7 L479 161.5 L479 161.5 L492.3 159 L504 150.7 L522.3 144 L520.7 144 L535.7 137.3 L550.7 130.7 L562.3 124.8 L579 125.7 L595.7 123.2 L604 118.2 L625.7 113.2 L639 116.5 L644 123.2 L652.3 129 L670.7 137.3 L682.3 144 L682.3 144 L685.7 154 L685.7 165.7 L694 179 L700.7 188.2 L705.7 199 L707.7 210.7 L709 227.3 L714 242.3 L719 250.7 L719 250.7 L721.5 264 L725.7 274 L724.8 290.7 M717.7 -1 L715.7 27.3 L712.3 47.3 L700.7 52.3 L698.2 60.7 L699 69 L695.7 77.3 L685.7 84 L677.3 94 L667.3 109 L659 120.7 L649 129 L639 137.3 L632.3 144 L632.3 144 L632.3 157.3 L629.8 172.3 L624 184 L615.7 197.3 L610.7 210.7 L607.3 217.3 L600.7 223.2 L594 226.5 L585.7 228.2 M949.8 79.3 L935.7 86.5 L929 92.3 L915.7 93.2 L895.7 94.8 L869 94 L842.3 94 L835.7 95.7 L825.7 102.3 L814 114 L804 127.3 L795.7 144 L795.7 144 L790.7 159 L782.3 177.3 L770.7 184 L759 184.8 L740.7 188.2 L729 184.8 L719 183.2 L719 183.2 L712.3 184 L702.3 189 L692.3 200.7 L684 214 L675.7 224 L659 234 L639 240.7 L626.5 243.2 L612.3 244 L601.5 244.8 M685.7 212.3 L704 210.7 L712.3 211.5 L719 214 L719 214 L722.3 222.3 L734 229 L737.3 235.7 L742.3 237.3 L749 235.7 L759 236.5 L772.3 235.7 L789 237.3 L802.3 240.7 L812.3 244 L820.7 245.7 L839 254 L855.7 253.2 L869 258.2 L879 258.2 L895.7 255.7 L922.3 267.3 L949.8 272.7 M627.3 252.3 L639 255.7 L655.7 259 L674 262.3 L689 265.7 L700.7 272.3 L710.7 280.7 L719 287.3 L719 287.3 L722.3 292.3 M607.3 260.7 L620.7 267.3 L635.7 272.3 L652.3 277.3 L670.7 280.7 L677.3 287.3 L679.8 292.3 M534 289 L545.7 285.7 L557.3 284 L560.7 269" fill="none" stroke="#f49b35" stroke-width="3.9" stroke-linejoin="round" stroke-linecap="round"/>
<path d="M343.7 -1 L341.3 10.7 L340 27.3 L340.7 44 L341.5 59.8 L355.7 69 L360.7 78.2 L370.7 84.8 L380.7 91.5 L382 103.2 L386.5 110.7 L395.7 115.3 L411.5 110.7 L422.3 119.8 L435.7 129.8 L445.7 135.7 L454 144 L451.5 144.8 L460.7 150.7 L472.3 165.7 L479 172.7 L479 173.7 L489 181.5 L509 192.3 L520.3 204.3 M474 167.3 L454 188.2 L447.3 200.7 L440.7 212.3 L429 221.5 L425.7 230.7 L424.8 237.3 L432.3 249 L435.7 259 L437.3 270.7 L442.3 280.7 L450.7 289 L454.8 294.8 M363.2 283.2 L377.3 275.7 L387.3 269.8 L395.7 266.5 L403.2 258.2 L409 253.7 L429 250.7 L432.3 249 L452.3 240.7 L462.3 234 L475.7 223.2 L479 224 L479 224 L492.3 230.7 L504 231.5 L518.2 232.3 M565.7 292.3 L557.3 284.8 L545.7 282.7 L532.3 279 L524 272.3 L520.7 254 L518.2 230.7 L518.2 219 L519.8 204.8 L527.3 197.3 L534 193.7 L565.7 189.8 L587.3 189.8 L595.7 193.2 L612.3 203.2 L620.7 212.3 L625.7 219 L626.5 237.3 L627.3 252.3 L628.2 267.3 L620.7 275.7 L612.3 285.7 L608.2 292.3 M608.2 -1 L599 15.7 L585.7 32.3 L572.3 49 L564 65.7 L552.3 84 L542.3 97.3 L537.3 110.7 L535.3 122.3 L536.5 132.3 L540.7 144 L540.7 144 L545.7 157.3 L550.7 172.3 L557.3 182.3 L565.7 189.8 M527.3 115.7 L532.3 125.7 L536.5 134 M472.3 165.7 L479 161.5 L479 161.5 L492.3 159 L504 150.7 L522.3 144 L520.7 144 L535.7 137.3 L550.7 130.7 L562.3 124.8 L579 125.7 L595.7 123.2 L604 118.2 L625.7 113.2 L639 116.5 L644 123.2 L652.3 129 L670.7 137.3 L682.3 144 L682.3 144 L685.7 154 L685.7 165.7 L694 179 L700.7 188.2 L705.7 199 L707.7 210.7 L709 227.3 L714 242.3 L719 250.7 L719 250.7 L721.5 264 L725.7 274 L724.8 290.7 M717.7 -1 L715.7 27.3 L712.3 47.3 L700.7 52.3 L698.2 60.7 L699 69 L695.7 77.3 L685.7 84 L677.3 94 L667.3 109 L659 120.7 L649 129 L639 137.3 L632.3 144 L632.3 144 L632.3 157.3 L629.8 172.3 L624 184 L615.7 197.3 L610.7 210.7 L607.3 217.3 L600.7 223.2 L594 226.5 L585.7 228.2 M949.8 79.3 L935.7 86.5 L929 92.3 L915.7 93.2 L895.7 94.8 L869 94 L842.3 94 L835.7 95.7 L825.7 102.3 L814 114 L804 127.3 L795.7 144 L795.7 144 L790.7 159 L782.3 177.3 L770.7 184 L759 184.8 L740.7 188.2 L729 184.8 L719 183.2 L719 183.2 L712.3 184 L702.3 189 L692.3 200.7 L684 214 L675.7 224 L659 234 L639 240.7 L626.5 243.2 L612.3 244 L601.5 244.8 M685.7 212.3 L704 210.7 L712.3 211.5 L719 214 L719 214 L722.3 222.3 L734 229 L737.3 235.7 L742.3 237.3 L749 235.7 L759 236.5 L772.3 235.7 L789 237.3 L802.3 240.7 L812.3 244 L820.7 245.7 L839 254 L855.7 253.2 L869 258.2 L879 258.2 L895.7 255.7 L922.3 267.3 L949.8 272.7 M627.3 252.3 L639 255.7 L655.7 259 L674 262.3 L689 265.7 L700.7 272.3 L710.7 280.7 L719 287.3 L719 287.3 L722.3 292.3 M607.3 260.7 L620.7 267.3 L635.7 272.3 L652.3 277.3 L670.7 280.7 L677.3 287.3 L679.8 292.3 M534 289 L545.7 285.7 L557.3 284 L560.7 269" fill="none" stroke="#fda846" stroke-width="2.5" stroke-linejoin="round" stroke-linecap="round"/>
<text x="611.5" y="36.6" font-size="12" fill="#909090" text-anchor="middle" stroke="#fff" stroke-width="2.4" stroke-linejoin="round" paint-order="stroke">什邡市</text>
<text x="527.3" y="100.8" font-size="12" fill="#909090" text-anchor="middle" stroke="#fff" stroke-width="2.4" stroke-linejoin="round" paint-order="stroke">彭州市</text>
<text x="657.3" y="107.5" font-size="12" fill="#909090" text-anchor="middle" stroke="#fff" stroke-width="2.4" stroke-linejoin="round" paint-order="stroke">广汉市</text>
<text x="816.5" y="81.9" font-size="12" fill="#909090" text-anchor="middle" stroke="#fff" stroke-width="2.4" stroke-linejoin="round" paint-order="stroke" letter-spacing="0.8">中江县</text>
<text x="402.7" y="101.6" font-size="12" fill="#909090" text-anchor="middle" stroke="#fff" stroke-width="2.4" stroke-linejoin="round" paint-order="stroke" letter-spacing="0.3">都江堰市</text>
<text x="644.8" y="154.0" font-size="14" fill="#909090" text-anchor="middle" stroke="#fff" stroke-width="2.4" stroke-linejoin="round" paint-order="stroke">青白江区</text>
<text x="607.7" y="179.8" font-size="14" fill="#909090" text-anchor="middle" stroke="#fff" stroke-width="2.4" stroke-linejoin="round" paint-order="stroke">新都区</text>
<text x="504.3" y="192.7" font-size="14" fill="#909090" text-anchor="middle" stroke="#fff" stroke-width="2.4" stroke-linejoin="round" paint-order="stroke">郫都区</text>
<text x="710.7" y="161.0" font-size="12" fill="#909090" text-anchor="middle" stroke="#fff" stroke-width="2.4" stroke-linejoin="round" paint-order="stroke" letter-spacing="0.8">金堂县</text>
<text x="569.3" y="249.0" font-size="14" fill="#909090" text-anchor="middle" stroke="#fff" stroke-width="2.4" stroke-linejoin="round" paint-order="stroke">青羊区</text>
<text x="486" y="246.5" font-size="14" fill="#909090" text-anchor="middle" stroke="#fff" stroke-width="2.4" stroke-linejoin="round" paint-order="stroke">温江区</text>
<text x="413.2" y="269.1" font-size="12" fill="#909090" text-anchor="middle" stroke="#fff" stroke-width="2.4" stroke-linejoin="round" paint-order="stroke">崇州市</text>
<text x="513" y="298.0" font-size="14" fill="#909090" text-anchor="middle" stroke="#fff" stroke-width="2.4" stroke-linejoin="round" paint-order="stroke">双流区</text>
<text x="350" y="297.3" font-size="12" fill="#909090" text-anchor="middle" stroke="#fff" stroke-width="2.4" stroke-linejoin="round" paint-order="stroke" letter-spacing="0.8">大邑县</text>
<circle cx="699.8" cy="25.4" r="2.3" fill="#fbe3c0" stroke="#dd4a48" stroke-width="1"/><circle cx="699.8" cy="25.4" r="0.8" fill="#dd4a48"/>
<text x="707" y="31.6" font-size="15" fill="#3a3a3a" stroke="#fff" stroke-width="2.6" stroke-linejoin="round" paint-order="stroke">德阳</text>
<circle cx="567.8" cy="286" r="3.2" fill="#fff" stroke="#e0383d" stroke-width="1.2"/><circle cx="567.8" cy="286" r="1.4" fill="#e0383d"/>
<text x="578" y="293" font-size="14" font-weight="700" fill="#111" stroke="#fff" stroke-width="2.6" stroke-linejoin="round" paint-order="stroke">成都</text>
</svg>

<div style="position:absolute;left:10px;top:10px;width:300px;height:30px;background:#fff;border-radius:2px;box-shadow:0 2px 6px rgba(0,0,0,.08)"><span style="position:absolute;left:10px;top:0;line-height:30px;color:#999">请输入地址</span><svg style="position:absolute;left:275px;top:7px" width="16" height="16" viewBox="0 0 16 16"><circle cx="7" cy="7" r="5" fill="none" stroke="#8c8c8c" stroke-width="1.9"/><path d="M10.8 10.8 L14 14" stroke="#8c8c8c" stroke-width="2.1" stroke-linecap="round"/></svg></div>
</div>
<div id="bp">
<div class="ttl">动态分段结果 ---三环路试点-2020.04.20 分段</div>
<div class="tr h g" style="top:40px"><div style="left:0px;width:56px"><i class="cb"></i></div><div style="left:56px;width:169px">编号</div><div style="left:225px;width:149px;padding-left:11px">管材类型</div><div style="left:374px;width:158px;padding-right:9px">壁厚（mm）</div><div style="left:532px;width:159px;padding-right:11px">管径（mm）</div><div style="left:691px;width:141px">防腐层类型</div><div style="left:832px;width:166px">管段数量</div><div style="left:998px;width:180px">操作</div></div>
<div class="tr" style="top:73px"><div style="left:0px;width:56px"><i class="cb ck"><svg style="position:absolute;left:-1px;top:-1px" width="16" height="16" viewBox="0 0 16 16"><path d="M3.4 8.4 L6.6 11.2 L12.6 5" fill="none" stroke="#fff" stroke-width="2.1"/></svg></i></div><div style="left:56px;width:169px">D9342050</div><div style="left:225px;width:149px;padding-left:11px">钢管</div><div style="left:374px;width:158px;padding-right:9px">3.4</div><div style="left:532px;width:159px;padding-right:11px">3.4</div><div style="left:691px;width:141px">XXX</div><div style="left:832px;width:166px">12</div><div style="left:998px;width:180px"><span class="lk">管段评价</span></div></div>
<div class="tr g" style="top:106px"><div style="left:0px;width:56px"><i class="cb"></i></div><div style="left:56px;width:169px">D9342050</div><div style="left:225px;width:149px;padding-left:11px">钢管</div><div style="left:374px;width:158px;padding-right:9px">3.4</div><div style="left:532px;width:159px;padding-right:11px">3.4</div><div style="left:691px;width:141px">XXX</div><div style="left:832px;width:166px">11</div><div style="left:998px;width:180px"><span class="lk">管段评价</span></div></div>
<div class="tr" style="top:139px"><div style="left:0px;width:56px"><i class="cb"></i></div><div style="left:56px;width:169px">D9342050</div><div style="left:225px;width:149px;padding-left:11px">钢管</div><div style="left:374px;width:158px;padding-right:9px">3.4</div><div style="left:532px;width:159px;padding-right:11px">3.4</div><div style="left:691px;width:141px">XXX</div><div style="left:832px;width:166px">10</div><div style="left:998px;width:180px"><span class="lk">管段评价</span></div></div>
<div class="tr g" style="top:172px"><div style="left:0px;width:56px"><i class="cb"></i></div><div style="left:56px;width:169px">D9342050</div><div style="left:225px;width:149px;padding-left:11px">钢管</div><div style="left:374px;width:158px;padding-right:9px">3.4</div><div style="left:532px;width:159px;padding-right:11px">3.4</div><div style="left:691px;width:141px">XXX</div><div style="left:832px;width:166px">14</div><div style="left:998px;width:180px"><span class="lk">管段评价</span></div></div>
<div class="tr" style="top:205px"><div style="left:0px;width:56px"><i class="cb"></i></div><div style="left:56px;width:169px">D9342050</div><div style="left:225px;width:149px;padding-left:11px">钢管</div><div style="left:374px;width:158px;padding-right:9px">3.4</div><div style="left:532px;width:159px;padding-right:11px">3.4</div><div style="left:691px;width:141px">XXX</div><div style="left:832px;width:166px">17</div><div style="left:998px;width:180px"><span class="lk">管段评价</span></div></div>
</div>
<div id="pg">
<span class="abs" style="left:761px;top:0;line-height:24px">共507条</span>
<div class="bx" style="left:812px;width:84px;border-radius:2px"><span class="abs" style="left:8px;top:0;line-height:22px">20条/页</span><svg class="abs" style="left:62px;top:8px" width="12" height="8" viewBox="0 0 12 8"><path d="M0.5 0.8 H11.5 L6 6.6 Z" fill="#1283fb"/></svg></div>
<div class="bx" style="left:906px;width:196px;border-radius:2px">
<div class="abs" style="left:0px;top:0;width:27px;height:22px;line-height:22px;"><svg width="10" height="12" viewBox="0 0 10 12" style="margin-top:5px"><path d="M7.6 1.2 L2.6 6 L7.6 10.8" fill="none" stroke="#222" stroke-width="1.8"/></svg></div>
<div class="abs" style="left:27px;top:0;width:24px;height:22px;line-height:22px;border-left:1px solid #d9d9d9;background:#1283fb;color:#fff;border-left:none">1</div>
<div class="abs" style="left:51px;top:0;width:28px;height:22px;line-height:22px;border-left:1px solid #d9d9d9;">2</div>
<div class="abs" style="left:79px;top:0;width:27px;height:22px;line-height:22px;border-left:1px solid #d9d9d9;">3</div>
<div class="abs" style="left:106px;top:0;width:28px;height:22px;line-height:22px;border-left:1px solid #d9d9d9;"><span style="color:#999;font-size:11px;letter-spacing:-1px">···</span></div>
<div class="abs" style="left:134px;top:0;width:34px;height:22px;line-height:22px;border-left:1px solid #d9d9d9;">25</div>
<div class="abs" style="left:168px;top:0;width:26px;height:22px;line-height:22px;border-left:1px solid #d9d9d9;"><svg width="10" height="12" viewBox="0 0 10 12" style="margin-top:5px"><path d="M2.4 1.2 L7.4 6 L2.4 10.8" fill="none" stroke="#222" stroke-width="1.8"/></svg></div>
</div>
<span class="abs" style="left:1112px;top:0;line-height:24px">前往</span>
<div class="bx" style="left:1142px;width:30px;border-radius:2px">10</div>
<span class="abs" style="left:1178px;top:0;line-height:24px">页</span>
</div>
</div>
</body>
</html>
